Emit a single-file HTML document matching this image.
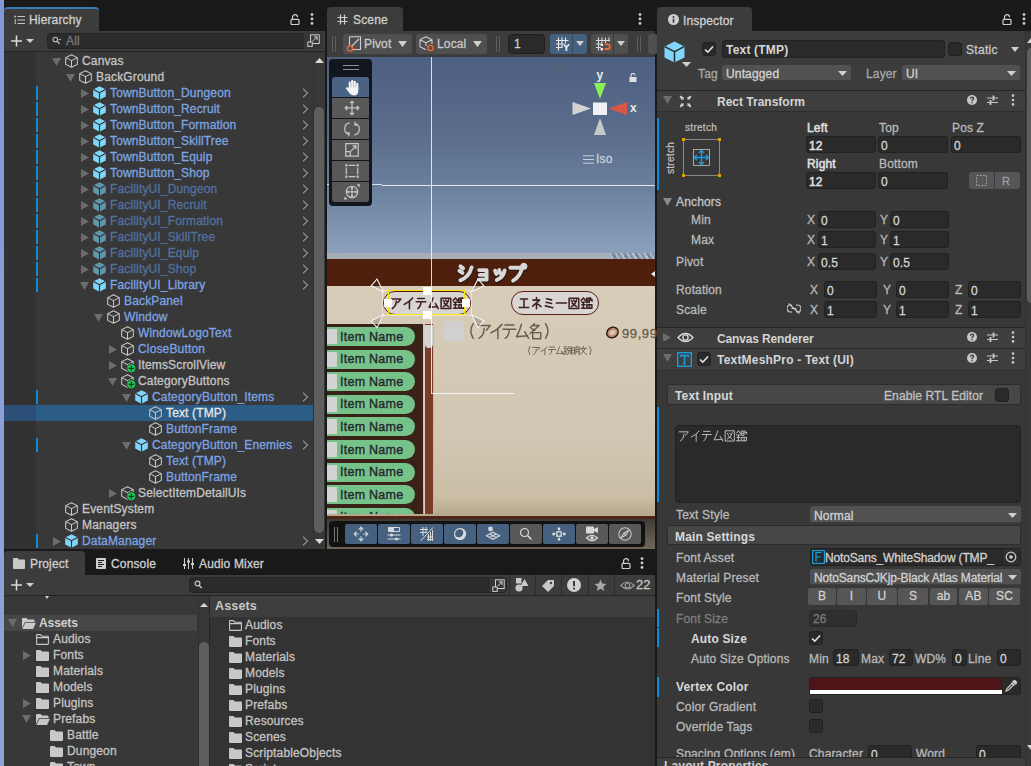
<!DOCTYPE html>
<html><head><meta charset="utf-8"><style>
*{box-sizing:border-box;margin:0;padding:0}
html,body{width:1031px;height:766px;overflow:hidden;background:#191919;font-family:"Liberation Sans",sans-serif;font-size:12px;color:#c4c4c4;position:relative}
.a{position:absolute}
.t{position:absolute;white-space:nowrap;line-height:16px;letter-spacing:.15px;font-size:12px;-webkit-text-stroke:.3px currentColor}
.tab{position:absolute;background:#3c3c3c;border-radius:4px 4px 0 0}
.fld{position:absolute;background:#2a2a2a;border:1px solid #212121;border-radius:3px}
.t[style*="bold"]{-webkit-text-stroke:0;font-size:12px}
.btn{position:absolute;background:#585858;border-radius:3px}
</style></head><body>
<div class="a" style="left:0;top:0;width:4px;height:766px;background:linear-gradient(#8298d6,#8aa0da 50%,#8ba3d8)"></div>
<div class="tab" style="left:4px;top:7px;width:95px;height:24px;border-top:2px solid #3a79bb"></div>
<svg class="a" style="left:14px;top:15px" width="11" height="10" viewBox="0 0 11 10"><path d="M3.5 1.5H11M3.5 5H11M3.5 8.5H11" stroke="#c8c8c8" stroke-width="1.1"/><path d="M.3 1.5H2M1.2 .5V2.5M1.2 4.2V9.2M1.2 5H2.2M1.2 8.5H2.2" stroke="#c8c8c8" stroke-width=".9"/></svg>
<div class="t" style="left:29px;top:12px;color:#cfcfcf">Hierarchy</div>
<svg class="a" style="left:290px;top:14px" width="10" height="11" viewBox="0 0 10 11"><path d="M2.5 5V3.2A2.5 2.5 0 0 1 7.5 3.2" fill="none" stroke="#d0d0d0" stroke-width="1.2"/><rect x="1" y="5.3" width="8" height="5.2" rx="1" fill="none" stroke="#d0d0d0" stroke-width="1.2"/></svg>
<svg class="a" style="left:310px;top:13px" width="4" height="12" viewBox="0 0 4 12"><circle cx="2" cy="1.6" r="1.4" fill="#d0d0d0"/><circle cx="2" cy="6" r="1.4" fill="#d0d0d0"/><circle cx="2" cy="10.4" r="1.4" fill="#d0d0d0"/></svg>
<div class="a" style="left:4px;top:31px;width:321px;height:21px;background:#3c3c3c;border-bottom:1px solid #242424"></div>
<svg class="a" style="left:10px;top:34px" width="26" height="14" viewBox="0 0 26 14"><path d="M6.5 1.5V12.5M1 7H12" stroke="#d8d8d8" stroke-width="1.6"/><path d="M16 5H24L20 9Z" fill="#d0d0d0"/></svg>
<div class="fld" style="left:47px;top:33px;width:276px;height:16px;border-radius:4px;background:#2b2b2b;border-color:#242424"></div>
<svg class="a" style="left:52px;top:36px" width="10" height="10" viewBox="0 0 10 10"><circle cx="3.3" cy="3.5" r="2.3" fill="none" stroke="#bdbdbd" stroke-width="1.1"/><path d="M5 5.2L7.6 7.8" stroke="#bdbdbd" stroke-width="1.3"/><path d="M6.3 3H9.3L7.8 4.6Z" fill="#bdbdbd"/></svg>
<div class="t" style="left:66px;top:33px;color:#7a7a7a">All</div>
<div class="a" style="left:304px;top:33px;width:19px;height:16px;background:#363636;border-radius:0 4px 4px 0"></div>
<svg class="a" style="left:307px;top:34px" width="13" height="13" viewBox="0 0 13 13"><rect x="3.5" y=".8" width="8.7" height="8.7" fill="none" stroke="#cfcfcf" stroke-width="1"/><rect x=".8" y="8" width="4.4" height="4.4" fill="#363636" stroke="#cfcfcf" stroke-width="1"/><path d="M5.5 7.3L10 2.8M6.8 2.8H10V6" fill="none" stroke="#cfcfcf" stroke-width="1"/></svg>
<div class="a" style="left:4px;top:52px;width:32px;height:497px;background:#323232"></div>
<div class="a" style="left:36px;top:52px;width:277px;height:497px;background:#383838"></div>
<div class="a" style="left:313px;top:52px;width:12px;height:497px;background:#383838;border-left:1px solid #303030"></div>
<svg class="a" style="left:315px;top:58px" width="9" height="5" viewBox="0 0 9 5"><path d="M0 5H9L4.5 0Z" fill="#d8d8d8"/></svg>
<svg class="a" style="left:315px;top:539px" width="9" height="5" viewBox="0 0 9 5"><path d="M0 0H9L4.5 5Z" fill="#d8d8d8"/></svg>
<div class="a" style="left:314px;top:107px;width:10px;height:426px;background:#5e5e5e;border-radius:5px"></div>
<div class="a" style="left:4px;top:405px;width:32px;height:16px;background:#2d4e76"></div>
<div class="a" style="left:36px;top:405px;width:277px;height:16px;background:#2c5d87"></div>
<svg class="a" style="left:52px;top:58px" width="9" height="8" viewBox="0 0 9 8"><path d="M0 0H9L4.5 8Z" fill="#6c6c6c"/></svg>
<svg class="a" style="left:65px;top:54px" width="13" height="14" viewBox="0 0 13 14"><path d="M6.5 .7L12.3 3.6V10.4L6.5 13.3L.7 10.4V3.6Z M.7 3.6L6.5 6.6L12.3 3.6M6.5 6.6V13.3" fill="none" stroke="#c9c9c9" stroke-width="1.05" stroke-linejoin="round"/></svg>
<div class="t" style="left:82px;top:53px;color:#c4c4c4">Canvas</div>
<svg class="a" style="left:66px;top:74px" width="9" height="8" viewBox="0 0 9 8"><path d="M0 0H9L4.5 8Z" fill="#6c6c6c"/></svg>
<svg class="a" style="left:79px;top:70px" width="13" height="14" viewBox="0 0 13 14"><path d="M6.5 .7L12.3 3.6V10.4L6.5 13.3L.7 10.4V3.6Z M.7 3.6L6.5 6.6L12.3 3.6M6.5 6.6V13.3" fill="none" stroke="#c9c9c9" stroke-width="1.05" stroke-linejoin="round"/></svg>
<div class="t" style="left:96px;top:69px;color:#c4c4c4">BackGround</div>
<svg class="a" style="left:81px;top:89px" width="8" height="9" viewBox="0 0 8 9"><path d="M0 0V9L8 4.5Z" fill="#6c6c6c"/></svg>
<svg class="a" style="left:93px;top:86px" width="13" height="14" viewBox="0 0 13 14"><path d="M6.5 .3L12.8 3.4V10.6L6.5 13.7L.2 10.6V3.4Z" fill="#80d5fa"/><path d="M.4 3.6L6.5 6.7L12.6 3.6M6.5 6.7V13.7" fill="none" stroke="#2d2d2d" stroke-width="1.1"/></svg>
<div class="t" style="left:110px;top:85px;color:#7ba4e3">TownButton_Dungeon</div>
<div class="a" style="left:36px;top:86px;width:2px;height:14px;background:#0f8bd8"></div>
<svg class="a" style="left:302px;top:88px" width="7" height="10" viewBox="0 0 7 10"><path d="M1 .8L5.6 5L1 9.2" fill="none" stroke="#8c8c8c" stroke-width="1.3"/></svg>
<svg class="a" style="left:81px;top:105px" width="8" height="9" viewBox="0 0 8 9"><path d="M0 0V9L8 4.5Z" fill="#6c6c6c"/></svg>
<svg class="a" style="left:93px;top:102px" width="13" height="14" viewBox="0 0 13 14"><path d="M6.5 .3L12.8 3.4V10.6L6.5 13.7L.2 10.6V3.4Z" fill="#80d5fa"/><path d="M.4 3.6L6.5 6.7L12.6 3.6M6.5 6.7V13.7" fill="none" stroke="#2d2d2d" stroke-width="1.1"/></svg>
<div class="t" style="left:110px;top:101px;color:#7ba4e3">TownButton_Recruit</div>
<div class="a" style="left:36px;top:102px;width:2px;height:14px;background:#0f8bd8"></div>
<svg class="a" style="left:302px;top:104px" width="7" height="10" viewBox="0 0 7 10"><path d="M1 .8L5.6 5L1 9.2" fill="none" stroke="#8c8c8c" stroke-width="1.3"/></svg>
<svg class="a" style="left:81px;top:121px" width="8" height="9" viewBox="0 0 8 9"><path d="M0 0V9L8 4.5Z" fill="#6c6c6c"/></svg>
<svg class="a" style="left:93px;top:118px" width="13" height="14" viewBox="0 0 13 14"><path d="M6.5 .3L12.8 3.4V10.6L6.5 13.7L.2 10.6V3.4Z" fill="#80d5fa"/><path d="M.4 3.6L6.5 6.7L12.6 3.6M6.5 6.7V13.7" fill="none" stroke="#2d2d2d" stroke-width="1.1"/></svg>
<div class="t" style="left:110px;top:117px;color:#7ba4e3">TownButton_Formation</div>
<div class="a" style="left:36px;top:118px;width:2px;height:14px;background:#0f8bd8"></div>
<svg class="a" style="left:302px;top:120px" width="7" height="10" viewBox="0 0 7 10"><path d="M1 .8L5.6 5L1 9.2" fill="none" stroke="#8c8c8c" stroke-width="1.3"/></svg>
<svg class="a" style="left:81px;top:137px" width="8" height="9" viewBox="0 0 8 9"><path d="M0 0V9L8 4.5Z" fill="#6c6c6c"/></svg>
<svg class="a" style="left:93px;top:134px" width="13" height="14" viewBox="0 0 13 14"><path d="M6.5 .3L12.8 3.4V10.6L6.5 13.7L.2 10.6V3.4Z" fill="#80d5fa"/><path d="M.4 3.6L6.5 6.7L12.6 3.6M6.5 6.7V13.7" fill="none" stroke="#2d2d2d" stroke-width="1.1"/></svg>
<div class="t" style="left:110px;top:133px;color:#7ba4e3">TownButton_SkillTree</div>
<div class="a" style="left:36px;top:134px;width:2px;height:14px;background:#0f8bd8"></div>
<svg class="a" style="left:302px;top:136px" width="7" height="10" viewBox="0 0 7 10"><path d="M1 .8L5.6 5L1 9.2" fill="none" stroke="#8c8c8c" stroke-width="1.3"/></svg>
<svg class="a" style="left:81px;top:153px" width="8" height="9" viewBox="0 0 8 9"><path d="M0 0V9L8 4.5Z" fill="#6c6c6c"/></svg>
<svg class="a" style="left:93px;top:150px" width="13" height="14" viewBox="0 0 13 14"><path d="M6.5 .3L12.8 3.4V10.6L6.5 13.7L.2 10.6V3.4Z" fill="#80d5fa"/><path d="M.4 3.6L6.5 6.7L12.6 3.6M6.5 6.7V13.7" fill="none" stroke="#2d2d2d" stroke-width="1.1"/></svg>
<div class="t" style="left:110px;top:149px;color:#7ba4e3">TownButton_Equip</div>
<div class="a" style="left:36px;top:150px;width:2px;height:14px;background:#0f8bd8"></div>
<svg class="a" style="left:302px;top:152px" width="7" height="10" viewBox="0 0 7 10"><path d="M1 .8L5.6 5L1 9.2" fill="none" stroke="#8c8c8c" stroke-width="1.3"/></svg>
<svg class="a" style="left:81px;top:169px" width="8" height="9" viewBox="0 0 8 9"><path d="M0 0V9L8 4.5Z" fill="#6c6c6c"/></svg>
<svg class="a" style="left:93px;top:166px" width="13" height="14" viewBox="0 0 13 14"><path d="M6.5 .3L12.8 3.4V10.6L6.5 13.7L.2 10.6V3.4Z" fill="#80d5fa"/><path d="M.4 3.6L6.5 6.7L12.6 3.6M6.5 6.7V13.7" fill="none" stroke="#2d2d2d" stroke-width="1.1"/></svg>
<div class="t" style="left:110px;top:165px;color:#7ba4e3">TownButton_Shop</div>
<div class="a" style="left:36px;top:166px;width:2px;height:14px;background:#0f8bd8"></div>
<svg class="a" style="left:302px;top:168px" width="7" height="10" viewBox="0 0 7 10"><path d="M1 .8L5.6 5L1 9.2" fill="none" stroke="#8c8c8c" stroke-width="1.3"/></svg>
<svg class="a" style="left:81px;top:185px" width="8" height="9" viewBox="0 0 8 9"><path d="M0 0V9L8 4.5Z" fill="#6c6c6c"/></svg>
<svg class="a" style="left:93px;top:182px" width="13" height="14" viewBox="0 0 13 14"><path d="M6.5 .3L12.8 3.4V10.6L6.5 13.7L.2 10.6V3.4Z" fill="#5f97ae"/><path d="M.4 3.6L6.5 6.7L12.6 3.6M6.5 6.7V13.7" fill="none" stroke="#2d2d2d" stroke-width="1.1"/></svg>
<div class="t" style="left:110px;top:181px;color:#5271a0">FacilityUI_Dungeon</div>
<div class="a" style="left:36px;top:182px;width:2px;height:14px;background:#0f8bd8"></div>
<svg class="a" style="left:302px;top:184px" width="7" height="10" viewBox="0 0 7 10"><path d="M1 .8L5.6 5L1 9.2" fill="none" stroke="#8c8c8c" stroke-width="1.3"/></svg>
<svg class="a" style="left:81px;top:201px" width="8" height="9" viewBox="0 0 8 9"><path d="M0 0V9L8 4.5Z" fill="#6c6c6c"/></svg>
<svg class="a" style="left:93px;top:198px" width="13" height="14" viewBox="0 0 13 14"><path d="M6.5 .3L12.8 3.4V10.6L6.5 13.7L.2 10.6V3.4Z" fill="#5f97ae"/><path d="M.4 3.6L6.5 6.7L12.6 3.6M6.5 6.7V13.7" fill="none" stroke="#2d2d2d" stroke-width="1.1"/></svg>
<div class="t" style="left:110px;top:197px;color:#5271a0">FacilityUI_Recruit</div>
<div class="a" style="left:36px;top:198px;width:2px;height:14px;background:#0f8bd8"></div>
<svg class="a" style="left:302px;top:200px" width="7" height="10" viewBox="0 0 7 10"><path d="M1 .8L5.6 5L1 9.2" fill="none" stroke="#8c8c8c" stroke-width="1.3"/></svg>
<svg class="a" style="left:81px;top:217px" width="8" height="9" viewBox="0 0 8 9"><path d="M0 0V9L8 4.5Z" fill="#6c6c6c"/></svg>
<svg class="a" style="left:93px;top:214px" width="13" height="14" viewBox="0 0 13 14"><path d="M6.5 .3L12.8 3.4V10.6L6.5 13.7L.2 10.6V3.4Z" fill="#5f97ae"/><path d="M.4 3.6L6.5 6.7L12.6 3.6M6.5 6.7V13.7" fill="none" stroke="#2d2d2d" stroke-width="1.1"/></svg>
<div class="t" style="left:110px;top:213px;color:#5271a0">FacilityUI_Formation</div>
<div class="a" style="left:36px;top:214px;width:2px;height:14px;background:#0f8bd8"></div>
<svg class="a" style="left:302px;top:216px" width="7" height="10" viewBox="0 0 7 10"><path d="M1 .8L5.6 5L1 9.2" fill="none" stroke="#8c8c8c" stroke-width="1.3"/></svg>
<svg class="a" style="left:81px;top:233px" width="8" height="9" viewBox="0 0 8 9"><path d="M0 0V9L8 4.5Z" fill="#6c6c6c"/></svg>
<svg class="a" style="left:93px;top:230px" width="13" height="14" viewBox="0 0 13 14"><path d="M6.5 .3L12.8 3.4V10.6L6.5 13.7L.2 10.6V3.4Z" fill="#5f97ae"/><path d="M.4 3.6L6.5 6.7L12.6 3.6M6.5 6.7V13.7" fill="none" stroke="#2d2d2d" stroke-width="1.1"/></svg>
<div class="t" style="left:110px;top:229px;color:#5271a0">FacilityUI_SkillTree</div>
<div class="a" style="left:36px;top:230px;width:2px;height:14px;background:#0f8bd8"></div>
<svg class="a" style="left:302px;top:232px" width="7" height="10" viewBox="0 0 7 10"><path d="M1 .8L5.6 5L1 9.2" fill="none" stroke="#8c8c8c" stroke-width="1.3"/></svg>
<svg class="a" style="left:81px;top:249px" width="8" height="9" viewBox="0 0 8 9"><path d="M0 0V9L8 4.5Z" fill="#6c6c6c"/></svg>
<svg class="a" style="left:93px;top:246px" width="13" height="14" viewBox="0 0 13 14"><path d="M6.5 .3L12.8 3.4V10.6L6.5 13.7L.2 10.6V3.4Z" fill="#5f97ae"/><path d="M.4 3.6L6.5 6.7L12.6 3.6M6.5 6.7V13.7" fill="none" stroke="#2d2d2d" stroke-width="1.1"/></svg>
<div class="t" style="left:110px;top:245px;color:#5271a0">FacilityUI_Equip</div>
<div class="a" style="left:36px;top:246px;width:2px;height:14px;background:#0f8bd8"></div>
<svg class="a" style="left:302px;top:248px" width="7" height="10" viewBox="0 0 7 10"><path d="M1 .8L5.6 5L1 9.2" fill="none" stroke="#8c8c8c" stroke-width="1.3"/></svg>
<svg class="a" style="left:81px;top:265px" width="8" height="9" viewBox="0 0 8 9"><path d="M0 0V9L8 4.5Z" fill="#6c6c6c"/></svg>
<svg class="a" style="left:93px;top:262px" width="13" height="14" viewBox="0 0 13 14"><path d="M6.5 .3L12.8 3.4V10.6L6.5 13.7L.2 10.6V3.4Z" fill="#5f97ae"/><path d="M.4 3.6L6.5 6.7L12.6 3.6M6.5 6.7V13.7" fill="none" stroke="#2d2d2d" stroke-width="1.1"/></svg>
<div class="t" style="left:110px;top:261px;color:#5271a0">FacilityUI_Shop</div>
<div class="a" style="left:36px;top:262px;width:2px;height:14px;background:#0f8bd8"></div>
<svg class="a" style="left:302px;top:264px" width="7" height="10" viewBox="0 0 7 10"><path d="M1 .8L5.6 5L1 9.2" fill="none" stroke="#8c8c8c" stroke-width="1.3"/></svg>
<svg class="a" style="left:80px;top:282px" width="9" height="8" viewBox="0 0 9 8"><path d="M0 0H9L4.5 8Z" fill="#6c6c6c"/></svg>
<svg class="a" style="left:93px;top:278px" width="13" height="14" viewBox="0 0 13 14"><path d="M6.5 .3L12.8 3.4V10.6L6.5 13.7L.2 10.6V3.4Z" fill="#80d5fa"/><path d="M.4 3.6L6.5 6.7L12.6 3.6M6.5 6.7V13.7" fill="none" stroke="#2d2d2d" stroke-width="1.1"/></svg>
<div class="t" style="left:110px;top:277px;color:#7ba4e3">FacilityUI_Library</div>
<div class="a" style="left:36px;top:278px;width:2px;height:14px;background:#0f8bd8"></div>
<svg class="a" style="left:302px;top:280px" width="7" height="10" viewBox="0 0 7 10"><path d="M1 .8L5.6 5L1 9.2" fill="none" stroke="#8c8c8c" stroke-width="1.3"/></svg>
<svg class="a" style="left:107px;top:294px" width="13" height="14" viewBox="0 0 13 14"><path d="M6.5 .7L12.3 3.6V10.4L6.5 13.3L.7 10.4V3.6Z M.7 3.6L6.5 6.6L12.3 3.6M6.5 6.6V13.3" fill="none" stroke="#c9c9c9" stroke-width="1.05" stroke-linejoin="round"/></svg>
<div class="t" style="left:124px;top:293px;color:#7ba4e3">BackPanel</div>
<svg class="a" style="left:94px;top:314px" width="9" height="8" viewBox="0 0 9 8"><path d="M0 0H9L4.5 8Z" fill="#6c6c6c"/></svg>
<svg class="a" style="left:107px;top:310px" width="13" height="14" viewBox="0 0 13 14"><path d="M6.5 .7L12.3 3.6V10.4L6.5 13.3L.7 10.4V3.6Z M.7 3.6L6.5 6.6L12.3 3.6M6.5 6.6V13.3" fill="none" stroke="#c9c9c9" stroke-width="1.05" stroke-linejoin="round"/></svg>
<div class="t" style="left:124px;top:309px;color:#7ba4e3">Window</div>
<svg class="a" style="left:121px;top:326px" width="13" height="14" viewBox="0 0 13 14"><path d="M6.5 .7L12.3 3.6V10.4L6.5 13.3L.7 10.4V3.6Z M.7 3.6L6.5 6.6L12.3 3.6M6.5 6.6V13.3" fill="none" stroke="#c9c9c9" stroke-width="1.05" stroke-linejoin="round"/></svg>
<div class="t" style="left:138px;top:325px;color:#7ba4e3">WindowLogoText</div>
<svg class="a" style="left:109px;top:345px" width="8" height="9" viewBox="0 0 8 9"><path d="M0 0V9L8 4.5Z" fill="#6c6c6c"/></svg>
<svg class="a" style="left:121px;top:342px" width="13" height="14" viewBox="0 0 13 14"><path d="M6.5 .7L12.3 3.6V10.4L6.5 13.3L.7 10.4V3.6Z M.7 3.6L6.5 6.6L12.3 3.6M6.5 6.6V13.3" fill="none" stroke="#c9c9c9" stroke-width="1.05" stroke-linejoin="round"/></svg>
<div class="t" style="left:138px;top:341px;color:#7ba4e3">CloseButton</div>
<svg class="a" style="left:109px;top:361px" width="8" height="9" viewBox="0 0 8 9"><path d="M0 0V9L8 4.5Z" fill="#6c6c6c"/></svg>
<svg class="a" style="left:121px;top:358px" width="16" height="16" viewBox="0 0 16 16"><path d="M6.5 .7L12.3 3.6V10.4L6.5 13.3L.7 10.4V3.6Z M.7 3.6L6.5 6.6L12.3 3.6M6.5 6.6V13.3" fill="none" stroke="#c9c9c9" stroke-width="1.05" stroke-linejoin="round"/><circle cx="10.3" cy="10.3" r="4.6" fill="#1fc255" stroke="#2a2a2a" stroke-width=".9"/><path d="M10.3 7.6V13M7.6 10.3H13" stroke="#1d3a24" stroke-width="1.2"/></svg>
<div class="t" style="left:138px;top:357px;color:#c4c4c4">ItemsScrollView</div>
<svg class="a" style="left:108px;top:378px" width="9" height="8" viewBox="0 0 9 8"><path d="M0 0H9L4.5 8Z" fill="#6c6c6c"/></svg>
<svg class="a" style="left:121px;top:374px" width="16" height="16" viewBox="0 0 16 16"><path d="M6.5 .7L12.3 3.6V10.4L6.5 13.3L.7 10.4V3.6Z M.7 3.6L6.5 6.6L12.3 3.6M6.5 6.6V13.3" fill="none" stroke="#c9c9c9" stroke-width="1.05" stroke-linejoin="round"/><circle cx="10.3" cy="10.3" r="4.6" fill="#1fc255" stroke="#2a2a2a" stroke-width=".9"/><path d="M10.3 7.6V13M7.6 10.3H13" stroke="#1d3a24" stroke-width="1.2"/></svg>
<div class="t" style="left:138px;top:373px;color:#c4c4c4">CategoryButtons</div>
<svg class="a" style="left:122px;top:394px" width="9" height="8" viewBox="0 0 9 8"><path d="M0 0H9L4.5 8Z" fill="#6c6c6c"/></svg>
<svg class="a" style="left:135px;top:390px" width="13" height="14" viewBox="0 0 13 14"><path d="M6.5 .3L12.8 3.4V10.6L6.5 13.7L.2 10.6V3.4Z" fill="#80d5fa"/><path d="M.4 3.6L6.5 6.7L12.6 3.6M6.5 6.7V13.7" fill="none" stroke="#2d2d2d" stroke-width="1.1"/></svg>
<div class="t" style="left:152px;top:389px;color:#7ba4e3">CategoryButton_Items</div>
<div class="a" style="left:36px;top:390px;width:2px;height:14px;background:#0f8bd8"></div>
<svg class="a" style="left:302px;top:392px" width="7" height="10" viewBox="0 0 7 10"><path d="M1 .8L5.6 5L1 9.2" fill="none" stroke="#8c8c8c" stroke-width="1.3"/></svg>
<svg class="a" style="left:149px;top:406px" width="13" height="14" viewBox="0 0 13 14"><path d="M6.5 .7L12.3 3.6V10.4L6.5 13.3L.7 10.4V3.6Z M.7 3.6L6.5 6.6L12.3 3.6M6.5 6.6V13.3" fill="none" stroke="#c9c9c9" stroke-width="1.05" stroke-linejoin="round"/></svg>
<div class="t" style="left:166px;top:405px;color:#e6e6e6">Text (TMP)</div>
<svg class="a" style="left:149px;top:422px" width="13" height="14" viewBox="0 0 13 14"><path d="M6.5 .7L12.3 3.6V10.4L6.5 13.3L.7 10.4V3.6Z M.7 3.6L6.5 6.6L12.3 3.6M6.5 6.6V13.3" fill="none" stroke="#c9c9c9" stroke-width="1.05" stroke-linejoin="round"/></svg>
<div class="t" style="left:166px;top:421px;color:#7ba4e3">ButtonFrame</div>
<svg class="a" style="left:122px;top:442px" width="9" height="8" viewBox="0 0 9 8"><path d="M0 0H9L4.5 8Z" fill="#6c6c6c"/></svg>
<svg class="a" style="left:135px;top:438px" width="13" height="14" viewBox="0 0 13 14"><path d="M6.5 .3L12.8 3.4V10.6L6.5 13.7L.2 10.6V3.4Z" fill="#80d5fa"/><path d="M.4 3.6L6.5 6.7L12.6 3.6M6.5 6.7V13.7" fill="none" stroke="#2d2d2d" stroke-width="1.1"/></svg>
<div class="t" style="left:152px;top:437px;color:#7ba4e3">CategoryButton_Enemies</div>
<div class="a" style="left:36px;top:438px;width:2px;height:14px;background:#0f8bd8"></div>
<svg class="a" style="left:302px;top:440px" width="7" height="10" viewBox="0 0 7 10"><path d="M1 .8L5.6 5L1 9.2" fill="none" stroke="#8c8c8c" stroke-width="1.3"/></svg>
<svg class="a" style="left:149px;top:454px" width="13" height="14" viewBox="0 0 13 14"><path d="M6.5 .7L12.3 3.6V10.4L6.5 13.3L.7 10.4V3.6Z M.7 3.6L6.5 6.6L12.3 3.6M6.5 6.6V13.3" fill="none" stroke="#c9c9c9" stroke-width="1.05" stroke-linejoin="round"/></svg>
<div class="t" style="left:166px;top:453px;color:#7ba4e3">Text (TMP)</div>
<svg class="a" style="left:149px;top:470px" width="13" height="14" viewBox="0 0 13 14"><path d="M6.5 .7L12.3 3.6V10.4L6.5 13.3L.7 10.4V3.6Z M.7 3.6L6.5 6.6L12.3 3.6M6.5 6.6V13.3" fill="none" stroke="#c9c9c9" stroke-width="1.05" stroke-linejoin="round"/></svg>
<div class="t" style="left:166px;top:469px;color:#7ba4e3">ButtonFrame</div>
<svg class="a" style="left:109px;top:489px" width="8" height="9" viewBox="0 0 8 9"><path d="M0 0V9L8 4.5Z" fill="#6c6c6c"/></svg>
<svg class="a" style="left:121px;top:486px" width="16" height="16" viewBox="0 0 16 16"><path d="M6.5 .7L12.3 3.6V10.4L6.5 13.3L.7 10.4V3.6Z M.7 3.6L6.5 6.6L12.3 3.6M6.5 6.6V13.3" fill="none" stroke="#c9c9c9" stroke-width="1.05" stroke-linejoin="round"/><circle cx="10.3" cy="10.3" r="4.6" fill="#1fc255" stroke="#2a2a2a" stroke-width=".9"/><path d="M10.3 7.6V13M7.6 10.3H13" stroke="#1d3a24" stroke-width="1.2"/></svg>
<div class="t" style="left:138px;top:485px;color:#c4c4c4">SelectItemDetailUIs</div>
<svg class="a" style="left:65px;top:502px" width="13" height="14" viewBox="0 0 13 14"><path d="M6.5 .7L12.3 3.6V10.4L6.5 13.3L.7 10.4V3.6Z M.7 3.6L6.5 6.6L12.3 3.6M6.5 6.6V13.3" fill="none" stroke="#c9c9c9" stroke-width="1.05" stroke-linejoin="round"/></svg>
<div class="t" style="left:82px;top:501px;color:#c4c4c4">EventSystem</div>
<svg class="a" style="left:65px;top:518px" width="13" height="14" viewBox="0 0 13 14"><path d="M6.5 .7L12.3 3.6V10.4L6.5 13.3L.7 10.4V3.6Z M.7 3.6L6.5 6.6L12.3 3.6M6.5 6.6V13.3" fill="none" stroke="#c9c9c9" stroke-width="1.05" stroke-linejoin="round"/></svg>
<div class="t" style="left:82px;top:517px;color:#c4c4c4">Managers</div>
<svg class="a" style="left:53px;top:537px" width="8" height="9" viewBox="0 0 8 9"><path d="M0 0V9L8 4.5Z" fill="#6c6c6c"/></svg>
<svg class="a" style="left:65px;top:534px" width="13" height="14" viewBox="0 0 13 14"><path d="M6.5 .3L12.8 3.4V10.6L6.5 13.7L.2 10.6V3.4Z" fill="#80d5fa"/><path d="M.4 3.6L6.5 6.7L12.6 3.6M6.5 6.7V13.7" fill="none" stroke="#2d2d2d" stroke-width="1.1"/></svg>
<div class="t" style="left:82px;top:533px;color:#7ba4e3">DataManager</div>
<div class="a" style="left:36px;top:534px;width:2px;height:14px;background:#0f8bd8"></div>
<svg class="a" style="left:302px;top:536px" width="7" height="10" viewBox="0 0 7 10"><path d="M1 .8L5.6 5L1 9.2" fill="none" stroke="#8c8c8c" stroke-width="1.3"/></svg>
<div class="tab" style="left:327px;top:7px;width:76px;height:24px"></div>
<svg class="a" style="left:337px;top:14px" width="11" height="11" viewBox="0 0 11 11"><path d="M3.5 .5V10.5M7.5 .5V10.5M.5 3.5H10.5M.5 7.5H10.5" stroke="#cfcfcf" stroke-width="1.2"/></svg>
<div class="t" style="left:353px;top:12px;color:#cfcfcf">Scene</div>
<svg class="a" style="left:638px;top:13px" width="4" height="12" viewBox="0 0 4 12"><circle cx="2" cy="1.6" r="1.4" fill="#d0d0d0"/><circle cx="2" cy="6" r="1.4" fill="#d0d0d0"/><circle cx="2" cy="10.4" r="1.4" fill="#d0d0d0"/></svg>
<div class="a" style="left:327px;top:31px;width:328px;height:26px;background:#3c3c3c"></div>
<div class="a" style="left:332px;top:36px;width:1px;height:16px;background:#5e5e5e"></div>
<div class="a" style="left:335px;top:36px;width:1px;height:16px;background:#5e5e5e"></div>
<div class="a" style="left:496px;top:36px;width:1px;height:16px;background:#5e5e5e"></div>
<div class="a" style="left:499px;top:36px;width:1px;height:16px;background:#5e5e5e"></div>
<div class="a" style="left:637px;top:36px;width:1px;height:16px;background:#5e5e5e"></div>
<div class="a" style="left:640px;top:36px;width:1px;height:16px;background:#5e5e5e"></div>
<div class="btn" style="left:343px;top:34px;width:69px;height:20px;background:#4f4f4f"></div>
<svg class="a" style="left:346px;top:36px" width="16" height="16" viewBox="0 0 16 16"><path d="M3.5 .8H14.5V13.5H6.5M3.5 .8V9.5M5 11L13 3" fill="none" stroke="#cfcfcf" stroke-width="1.1"/><circle cx="4" cy="12.5" r="2.6" fill="none" stroke="#f26b2c" stroke-width="1.3"/></svg>
<div class="t" style="left:364px;top:36px;color:#c8c8c8">Pivot</div>
<svg class="a" style="left:398px;top:41px" width="9" height="6" viewBox="0 0 9 6"><path d="M0 0H9L4.5 6Z" fill="#cfcfcf"/></svg>
<div class="btn" style="left:416px;top:34px;width:71px;height:20px;background:#4f4f4f"></div>
<svg class="a" style="left:419px;top:36px" width="16" height="16" viewBox="0 0 16 16"><path d="M7 .8L13 3.8V8M1 3.8V10.8L7 13.8M1 3.8L7 6.8L13 3.8M7 6.8V10M7 .8L1 3.8" fill="none" stroke="#cfcfcf" stroke-width="1.1" stroke-linejoin="round"/><circle cx="11.5" cy="12" r="2.6" fill="none" stroke="#f26b2c" stroke-width="1.3"/></svg>
<div class="t" style="left:437px;top:36px;color:#c8c8c8">Local</div>
<svg class="a" style="left:473px;top:41px" width="9" height="6" viewBox="0 0 9 6"><path d="M0 0H9L4.5 6Z" fill="#cfcfcf"/></svg>
<div class="fld" style="left:508px;top:34px;width:37px;height:20px;background:#2a2a2a;border-color:#1f1f1f;border-radius:4px"></div>
<div class="t" style="left:514px;top:36px;color:#cfcfcf">1</div>
<div class="btn" style="left:550px;top:34px;width:37px;height:20px;background:#46607f"></div>
<div class="a" style="left:572px;top:34px;width:1px;height:20px;background:#3a4c64"></div>
<svg class="a" style="left:556px;top:37px" width="14" height="14" viewBox="0 0 14 14"><path d="M2.5 .5V13.5M6 .5V11M9.5 .5V6.5M0 3.5H12.5M0 7H7.5M0 10.5H6.5" stroke="#e8e8e8" stroke-width="1.1" fill="none"/><path d="M7.8 7.2L10.4 10.4L13 7.2M10.4 10.4V14" stroke="#e8e8e8" stroke-width="1.8" fill="none"/></svg>
<svg class="a" style="left:576px;top:41px" width="8" height="5" viewBox="0 0 8 5"><path d="M0 0H8L4 5Z" fill="#cfcfcf"/></svg>
<div class="btn" style="left:591px;top:34px;width:37px;height:20px;background:#4f4f4f"></div>
<div class="a" style="left:613px;top:34px;width:1px;height:20px;background:#3c3c3c"></div>
<svg class="a" style="left:596px;top:37px" width="15" height="14" viewBox="0 0 15 14"><path d="M2.5 .5V13.5M6 .5V6M9.5 .5V6M13 .5V4.5M0 3.5H14M0 7H5M0 10.5H5" stroke="#d8d8d8" stroke-width="1.1" fill="none"/><rect x="4.6" y="6.6" width="2.4" height="2.4" fill="#f0f0f0"/><rect x="4.6" y="11" width="2.4" height="2.4" fill="#f0f0f0"/><path d="M8.5 7.4H11.6A2.3 2.3 0 0 1 11.6 12H8.5" fill="none" stroke="#f26b2c" stroke-width="1.8"/></svg>
<svg class="a" style="left:617px;top:41px" width="8" height="5" viewBox="0 0 8 5"><path d="M0 0H8L4 5Z" fill="#cfcfcf"/></svg>
<div class="btn" style="left:648px;top:34px;width:10px;height:20px;background:#4f4f4f"></div>
<div class="a" style="left:327px;top:57px;width:328px;height:492px;overflow:hidden;background:#3a2a22">
<div class="a" style="left:0;top:0;width:328px;height:196px;background:linear-gradient(#4e6082 0%,#5a6d8c 40%,#6a7f9d 65%,#8aa0bb 100%)"></div>
<div class="a" style="left:0;top:196px;width:328px;height:6px;background:linear-gradient(90deg,#a4acb4,#aab0b8 60%,#a8b0b8 66%)"></div>
<div class="a" style="left:285px;top:196px;width:43px;height:6px;background:repeating-linear-gradient(60deg,#bcc2ca 0 2px,#7889a0 2px 5px,#aeb6c0 5px 7px,#8796aa 7px 10px)"></div>
<div class="a" style="left:0;top:202px;width:328px;height:27px;background:#4d1f0c"></div>
<svg class="a" style="left:324px;top:214px" width="4" height="6" viewBox="0 0 4 6"><path d="M4 0V6L0 3Z" fill="#e8e8e8"/></svg>
<div class="a" style="left:0;top:229px;width:328px;height:230px;background:linear-gradient(#d6ccb8,#d0c6b1 70%,#c9bda4 92%,#b5a78c)"></div>
<div class="a" style="left:0;top:459px;width:328px;height:3px;background:#4f2414"></div>
<div class="a" style="left:0;top:462px;width:328px;height:30px;background:linear-gradient(#3d3a34,#5a5248 50%,#6e6659)"></div>
<div class="a" style="left:0;top:267px;width:96px;height:190px;background:#3b2218"></div>
<div class="a" style="left:97px;top:267px;width:10px;height:190px;background:#7a3b28;border-left:1px solid #d8cfc0;border-right:1px solid #c9b9a8"></div>
<div class="a" style="left:98px;top:268px;width:8px;height:23px;background:#d2d2d2;border-radius:0 0 4px 4px"></div>
<div class="a" style="left:0;top:267px;width:96px;height:190px;overflow:hidden">
<div class="a" style="left:-10px;top:3.0px;width:98px;height:19px;background:#75c389;border-radius:10px"></div>
<div class="a" style="left:0;top:5.0px;width:10px;height:15px;background:#d3d3d3"></div>
<div class="t" style="left:13px;top:4.5px;color:#1d2c2a;font-size:12.5px;letter-spacing:.25px;-webkit-text-stroke:.5px #1d2c2a;text-shadow:0 0 1.2px #c5e8cd">Item Name</div>
<div class="a" style="left:-10px;top:25.6px;width:98px;height:19px;background:#75c389;border-radius:10px"></div>
<div class="a" style="left:0;top:27.6px;width:10px;height:15px;background:#d3d3d3"></div>
<div class="t" style="left:13px;top:27.1px;color:#1d2c2a;font-size:12.5px;letter-spacing:.25px;-webkit-text-stroke:.5px #1d2c2a;text-shadow:0 0 1.2px #c5e8cd">Item Name</div>
<div class="a" style="left:-10px;top:48.2px;width:98px;height:19px;background:#75c389;border-radius:10px"></div>
<div class="a" style="left:0;top:50.2px;width:10px;height:15px;background:#d3d3d3"></div>
<div class="t" style="left:13px;top:49.7px;color:#1d2c2a;font-size:12.5px;letter-spacing:.25px;-webkit-text-stroke:.5px #1d2c2a;text-shadow:0 0 1.2px #c5e8cd">Item Name</div>
<div class="a" style="left:-10px;top:70.8px;width:98px;height:19px;background:#75c389;border-radius:10px"></div>
<div class="a" style="left:0;top:72.8px;width:10px;height:15px;background:#d3d3d3"></div>
<div class="t" style="left:13px;top:72.3px;color:#1d2c2a;font-size:12.5px;letter-spacing:.25px;-webkit-text-stroke:.5px #1d2c2a;text-shadow:0 0 1.2px #c5e8cd">Item Name</div>
<div class="a" style="left:-10px;top:93.4px;width:98px;height:19px;background:#75c389;border-radius:10px"></div>
<div class="a" style="left:0;top:95.4px;width:10px;height:15px;background:#d3d3d3"></div>
<div class="t" style="left:13px;top:94.9px;color:#1d2c2a;font-size:12.5px;letter-spacing:.25px;-webkit-text-stroke:.5px #1d2c2a;text-shadow:0 0 1.2px #c5e8cd">Item Name</div>
<div class="a" style="left:-10px;top:116.0px;width:98px;height:19px;background:#75c389;border-radius:10px"></div>
<div class="a" style="left:0;top:118.0px;width:10px;height:15px;background:#d3d3d3"></div>
<div class="t" style="left:13px;top:117.5px;color:#1d2c2a;font-size:12.5px;letter-spacing:.25px;-webkit-text-stroke:.5px #1d2c2a;text-shadow:0 0 1.2px #c5e8cd">Item Name</div>
<div class="a" style="left:-10px;top:138.6px;width:98px;height:19px;background:#75c389;border-radius:10px"></div>
<div class="a" style="left:0;top:140.6px;width:10px;height:15px;background:#d3d3d3"></div>
<div class="t" style="left:13px;top:140.1px;color:#1d2c2a;font-size:12.5px;letter-spacing:.25px;-webkit-text-stroke:.5px #1d2c2a;text-shadow:0 0 1.2px #c5e8cd">Item Name</div>
<div class="a" style="left:-10px;top:161.2px;width:98px;height:19px;background:#75c389;border-radius:10px"></div>
<div class="a" style="left:0;top:163.2px;width:10px;height:15px;background:#d3d3d3"></div>
<div class="t" style="left:13px;top:162.7px;color:#1d2c2a;font-size:12.5px;letter-spacing:.25px;-webkit-text-stroke:.5px #1d2c2a;text-shadow:0 0 1.2px #c5e8cd">Item Name</div>
<div class="a" style="left:-10px;top:183.8px;width:98px;height:19px;background:#75c389;border-radius:10px"></div>
<div class="a" style="left:0;top:185.8px;width:10px;height:15px;background:#d3d3d3"></div>
<div class="t" style="left:13px;top:185.3px;color:#1d2c2a;font-size:12.5px;letter-spacing:.25px;-webkit-text-stroke:.5px #1d2c2a;text-shadow:0 0 1.2px #c5e8cd">Item Name</div>
</div>
</div>
<svg class="a" style="left:457px;top:265px;overflow:visible" width="68.00" height="17" viewBox="0 0 40.00 10"><g fill="none" stroke="#2a1a10" stroke-width="2.8" stroke-linecap="round" stroke-linejoin="round"><path transform="translate(0.00 0)" d="M2 1.4L3.6 2.6M1.4 4L3.2 5.2M8.6 2Q7.2 7.6 2 9.6"/><path transform="translate(10.00 0)" d="M3 3.6H7.4V9.2H3M3.4 6.4H7.4"/><path transform="translate(20.00 0)" d="M2.4 4L3.2 5.8M4.8 3.6L5.4 5.4M8 3.8Q7.2 8 3.4 9.4"/><path transform="translate(30.00 0)" d="M1.4 2.2H8.2Q7.4 7.2 3 9.8M9.3 .4A1 1 0 1 0 9.31 .4"/></g></svg>
<svg class="a" style="left:457px;top:264px;overflow:visible" width="68.00" height="17" viewBox="0 0 40.00 10"><g fill="none" stroke="#d8d8d8" stroke-width="2.3" stroke-linecap="round" stroke-linejoin="round"><path transform="translate(0.00 0)" d="M2 1.4L3.6 2.6M1.4 4L3.2 5.2M8.6 2Q7.2 7.6 2 9.6"/><path transform="translate(10.00 0)" d="M3 3.6H7.4V9.2H3M3.4 6.4H7.4"/><path transform="translate(20.00 0)" d="M2.4 4L3.2 5.8M4.8 3.6L5.4 5.4M8 3.8Q7.2 8 3.4 9.4"/><path transform="translate(30.00 0)" d="M1.4 2.2H8.2Q7.4 7.2 3 9.8M9.3 .4A1 1 0 1 0 9.31 .4"/></g></svg>
<div class="a" style="left:383px;top:291px;width:88px;height:24px;background:#d8d5d2;border:1.6px solid #5a1a1a;border-radius:12px"></div>
<svg class="a" style="left:390px;top:297px;overflow:visible" width="74.88" height="12" viewBox="0 0 62.40 10"><g fill="none" stroke="#3f2020" stroke-width="1.3" stroke-linecap="round" stroke-linejoin="round"><path transform="translate(0.00 0)" d="M1 1.6H9L6.6 4.6M5.2 3.4Q5.2 7.6 2 9.6"/><path transform="translate(10.40 0)" d="M8.4 .8Q5.5 4.4 1.4 6.2M5.8 3.8V9.8"/><path transform="translate(20.80 0)" d="M2.2 1.2H7.8M1 3.9H9M5 3.9Q5 7.6 2.4 9.6"/><path transform="translate(31.20 0)" d="M4.6 .8Q3.2 5.6 1.4 8.6Q5 8.4 8.4 8M6.6 5.4L9 9.6"/><path transform="translate(41.60 0)" d="M1 1V9.6H9V1ZM2.8 2.8L3.8 4.2M4.8 2.6L5.8 3.8M7.2 2.4Q6.4 6.4 2.8 8M3.6 5.2L7.2 8"/><path transform="translate(52.00 0)" d="M2.5 .8L.6 3M2.5 .8L4.2 3M1.2 4.4H3.8M1.2 6.4H3.8M2.5 4.4V9.4M.8 9.4H4.2M5.2 1H7.4V4.6H5.2ZM5.2 2.8H7.4M8.2 .6L9.8 3.4M8.4 2.4H9.8M5.4 6.4H9.6V9.4H5.4ZM7.5 6.4V9.4"/></g></svg>
<div class="a" style="left:511px;top:291px;width:88px;height:24px;background:#d8d5d2;border:1.6px solid #5a1a1a;border-radius:12px"></div>
<svg class="a" style="left:518px;top:297px;overflow:visible" width="74.88" height="12" viewBox="0 0 62.40 10"><g fill="none" stroke="#3f2020" stroke-width="1.3" stroke-linecap="round" stroke-linejoin="round"><path transform="translate(0.00 0)" d="M2 1.6H8M5 1.6V8.8M1 8.8H9"/><path transform="translate(10.40 0)" d="M5 .4V2M2 2.6H7.6L1.8 7.6M5 5.4V9.8M6.2 6L8.8 8"/><path transform="translate(20.80 0)" d="M3 1.4L7.2 2.4M2.6 4.4L7.2 5.4M2 7.4L8.2 9"/><path transform="translate(31.20 0)" d="M.8 5H9.2"/><path transform="translate(41.60 0)" d="M1 1V9.6H9V1ZM2.8 2.8L3.8 4.2M4.8 2.6L5.8 3.8M7.2 2.4Q6.4 6.4 2.8 8M3.6 5.2L7.2 8"/><path transform="translate(52.00 0)" d="M2.5 .8L.6 3M2.5 .8L4.2 3M1.2 4.4H3.8M1.2 6.4H3.8M2.5 4.4V9.4M.8 9.4H4.2M5.2 1H7.4V4.6H5.2ZM5.2 2.8H7.4M8.2 .6L9.8 3.4M8.4 2.4H9.8M5.4 6.4H9.6V9.4H5.4ZM7.5 6.4V9.4"/></g></svg>
<div class="a" style="left:444px;top:321px;width:20px;height:20px;background:#d2d0ce"></div>
<svg class="a" style="left:463px;top:323px;overflow:visible" width="89.60" height="16" viewBox="0 0 56.00 10"><g fill="none" stroke="#6a5d50" stroke-width="0.9" stroke-linecap="round" stroke-linejoin="round"><path transform="translate(0.00 0)" d="M6.4 .4Q3.4 5 6.4 9.6"/><path transform="translate(8.00 0)" d="M1 1.6H9L6.6 4.6M5.2 3.4Q5.2 7.6 2 9.6"/><path transform="translate(16.00 0)" d="M8.4 .8Q5.5 4.4 1.4 6.2M5.8 3.8V9.8"/><path transform="translate(24.00 0)" d="M2.2 1.2H7.8M1 3.9H9M5 3.9Q5 7.6 2.4 9.6"/><path transform="translate(32.00 0)" d="M4.6 .8Q3.2 5.6 1.4 8.6Q5 8.4 8.4 8M6.6 5.4L9 9.6"/><path transform="translate(40.00 0)" d="M4.6 .4L2 3M3.6 1.6H7.6L2 6.6M3 3.6L5 4.6M3.6 6H8.6V9.8H3.6Z"/><path transform="translate(48.00 0)" d="M3.6 .4Q6.6 5 3.6 9.6"/></g></svg>
<svg class="a" style="left:524px;top:346px;overflow:visible" width="70.47" height="9" viewBox="0 0 78.30 10"><g fill="none" stroke="#6a5d50" stroke-width="1.0" stroke-linecap="round" stroke-linejoin="round"><path transform="translate(0.00 0)" d="M6.4 .4Q3.4 5 6.4 9.6"/><path transform="translate(8.70 0)" d="M1 1.6H9L6.6 4.6M5.2 3.4Q5.2 7.6 2 9.6"/><path transform="translate(17.40 0)" d="M8.4 .8Q5.5 4.4 1.4 6.2M5.8 3.8V9.8"/><path transform="translate(26.10 0)" d="M2.2 1.2H7.8M1 3.9H9M5 3.9Q5 7.6 2.4 9.6"/><path transform="translate(34.80 0)" d="M4.6 .8Q3.2 5.6 1.4 8.6Q5 8.4 8.4 8M6.6 5.4L9 9.6"/><path transform="translate(43.50 0)" d="M.8 1H4.2M1.4 2.8H3.6M1.4 4.4H3.6M1.4 6H3.6V9H1.4ZM6 .4L6.6 1.6M9 .4L8.4 1.6M5.4 2.6H9.6V5H5.4ZM6.6 5Q6.6 8.6 5 9.6M8.4 5V9H9.8"/><path transform="translate(52.20 0)" d="M1 2H4V8H1ZM1 5H4M5.6 1H9V9.6M5.6 1V6Q5.6 9 4.6 9.8M5.6 3.8H9M5.6 6.4H9"/><path transform="translate(60.90 0)" d="M5 .4V1.8M1 2.6H9M3 3Q5 7.6 9 9.6M7 3Q5 7.6 1 9.6"/><path transform="translate(69.60 0)" d="M3.6 .4Q6.6 5 3.6 9.6"/></g></svg>
<svg class="a" style="left:605px;top:325px" width="15" height="15" viewBox="0 0 15 15"><ellipse cx="7.5" cy="7.5" rx="6" ry="5" transform="rotate(-30 7.5 7.5)" fill="#c08a6a" stroke="#1e1410" stroke-width="1.3"/><ellipse cx="7.5" cy="7.5" rx="3.4" ry="2.4" transform="rotate(-30 7.5 7.5)" fill="#dcc4b4"/></svg>
<div class="t" style="left:622px;top:326px;color:#6a5c50;font-size:13px;letter-spacing:.6px">99,999</div>
<div class="a" style="left:382px;top:290px;width:90px;height:26px;border:1px solid rgba(255,255,255,.45)"></div>
<div class="a" style="left:388px;top:290px;width:77px;height:25px;border:1.5px solid #f5e800"></div>
<div class="a" style="left:423px;top:287px;width:8px;height:8px;background:#fff"></div>
<div class="a" style="left:384px;top:299px;width:8px;height:8px;background:#fff"></div>
<div class="a" style="left:462px;top:299px;width:8px;height:8px;background:#fff"></div>
<div class="a" style="left:423px;top:311px;width:8px;height:8px;background:#fff"></div>
<svg class="a" style="left:365px;top:272px" width="125" height="60" viewBox="0 0 125 60"><path d="M12.0 7.0 L6.2 13.8 L18.4 19.8ZM12.0 55.6 L6.2 48.8 L18.4 42.8ZM113.0 7.0 L118.8 13.8 L106.6 19.8ZM113.0 55.6 L118.8 48.8 L106.6 42.8Z" fill="rgba(40,20,10,.18)" stroke="#f4f4f4" stroke-width="1.1"/></svg>
<div class="a" style="left:431px;top:57px;width:1px;height:337px;background:rgba(255,255,255,.8)"></div>
<div class="a" style="left:327px;top:184px;width:55px;height:1px;background:rgba(255,255,255,.75)"></div>
<div class="a" style="left:382px;top:185px;width:273px;height:1px;background:rgba(255,255,255,.8)"></div>
<div class="a" style="left:431px;top:393px;width:83px;height:1px;background:rgba(255,255,255,.8)"></div>
<div class="a" style="left:329px;top:59px;width:43px;height:147px;background:#12161d;border-radius:4px"></div>
<div class="a" style="left:343px;top:65px;width:16px;height:1px;background:#8a8f96"></div>
<div class="a" style="left:343px;top:69px;width:16px;height:1px;background:#8a8f96"></div>
<div class="a" style="left:332px;top:77px;width:37px;height:20px;background:#4a6283;border-radius:3px 3px 0 0"></div>
<svg class="a" style="left:343.5px;top:79px" width="16" height="17" viewBox="0 0 14 15"><path d="M5 9V3.2M7.2 8.5V1.8M9.4 8.5V2.4M11.6 9V4.2" stroke="#f4f4f4" stroke-width="1.9" stroke-linecap="round"/><path d="M4.1 7.5H12.5V10.5Q12.5 14.5 8.5 14.5Q6 14.5 4.8 12.6L1.8 8.6Q1.2 7.6 2.2 7.3Q3 7.1 3.6 7.8L4.1 8.5Z" fill="#f4f4f4"/></svg>
<div class="a" style="left:332px;top:98px;width:37px;height:20px;background:#585858;border-radius:0"></div>
<svg class="a" style="left:343.5px;top:100px" width="16" height="17" viewBox="0 0 14 15"><path d="M7 1V13M1 7H13M5.2 2.8L7 1L8.8 2.8M5.2 11.2L7 13L8.8 11.2M2.8 5.2L1 7L2.8 8.8M11.2 5.2L13 7L11.2 8.8" fill="none" stroke="#c4c4c4" stroke-width="1.1"/></svg>
<div class="a" style="left:332px;top:119px;width:37px;height:20px;background:#585858;border-radius:0"></div>
<svg class="a" style="left:343.5px;top:121px" width="16" height="17" viewBox="0 0 14 15"><path d="M9.8 2.2A5.2 5.2 0 0 1 9 12.3M4.2 11.8A5.2 5.2 0 0 1 5 1.7M9.6 .6V3.6H12.4M4.4 13.4V10.4H1.6" fill="none" stroke="#c4c4c4" stroke-width="1.1"/></svg>
<div class="a" style="left:332px;top:140px;width:37px;height:20px;background:#585858;border-radius:0"></div>
<svg class="a" style="left:343.5px;top:142px" width="16" height="17" viewBox="0 0 14 15"><path d="M1.5 1.5H12.5V12.5H1.5ZM1.5 8.5H5.5V12.5M6 8L10.5 3.5M7.5 3.5H10.5V6.5" fill="none" stroke="#c4c4c4" stroke-width="1.1"/></svg>
<div class="a" style="left:332px;top:161px;width:37px;height:20px;background:#585858;border-radius:0"></div>
<svg class="a" style="left:343.5px;top:163px" width="16" height="17" viewBox="0 0 14 15"><path d="M4 2H10M4 12H10M2 4V10M12 4V10" fill="none" stroke="#c4c4c4" stroke-width="1.1"/><rect x="1" y="1" width="2" height="2" fill="#c4c4c4"/><rect x="11" y="1" width="2" height="2" fill="#c4c4c4"/><rect x="1" y="11" width="2" height="2" fill="#c4c4c4"/><rect x="11" y="11" width="2" height="2" fill="#c4c4c4"/></svg>
<div class="a" style="left:332px;top:182px;width:37px;height:20px;background:#585858;border-radius:0 0 3px 3px"></div>
<svg class="a" style="left:343.5px;top:184px" width="16" height="17" viewBox="0 0 14 15"><circle cx="7" cy="7" r="5" fill="none" stroke="#c4c4c4" stroke-width="1.1"/><path d="M7 3V11M3 7H11M6 4L7 3L8 4M6 10L7 11L8 10M4 6L3 7L4 8M10 6L11 7L10 8" fill="none" stroke="#c4c4c4" stroke-width="1"/><path d="M0 14L3 13.5L.5 11ZM14 0L11 .5L13.5 3Z" fill="#c4c4c4"/></svg>
<div class="a" style="left:551px;top:65px;width:16px;height:1px;background:#5d6470"></div>
<div class="a" style="left:551px;top:68px;width:16px;height:1px;background:#5d6470"></div>
<svg class="a" style="left:570px;top:68px" width="70" height="70" viewBox="0 0 70 70"><path d="M24 15H36L30 31Z" fill="#8cef5a"/><path d="M24 67H36L30 50Z" fill="#c8c8c8"/><path d="M2.5 34V47L21 40.5Z" fill="#d2d2d2"/><path d="M57 34V47L38 40.5Z" fill="#d9574a"/><rect x="23" y="34.5" width="14" height="12.5" fill="#eef0f4"/><text x="26.5" y="11" font-family="Liberation Sans" font-weight="bold" font-size="12" fill="#e8e8e8">y</text><text x="60" y="44" font-family="Liberation Sans" font-weight="bold" font-size="12" fill="#e8e8e8">x</text></svg>
<svg class="a" style="left:629px;top:73px" width="8" height="9" viewBox="0 0 8 9"><path d="M2 4V2.5A2 2 0 0 1 6 2.5" fill="none" stroke="#e0e0e0" stroke-width="1.1"/><rect x=".5" y="4" width="7" height="5" fill="#e0e0e0"/></svg>
<svg class="a" style="left:583px;top:155px" width="11" height="9" viewBox="0 0 11 9"><path d="M0 .8H11M0 4.5H11M0 8.2H11" stroke="#c9d0da" stroke-width="1"/></svg>
<div class="t" style="left:596px;top:151px;color:#c9d0da;font-size:12px">Iso</div>
<div class="a" style="left:329px;top:521px;width:316px;height:26px;background:#121212;border-radius:4px"></div>
<div class="a" style="left:334px;top:527px;width:1px;height:15px;background:#777"></div>
<div class="a" style="left:337px;top:527px;width:1px;height:15px;background:#777"></div>
<div class="a" style="left:345px;top:524px;width:32px;height:20px;background:#46607f;border-radius:2px"></div>
<svg class="a" style="left:353px;top:526px" width="16" height="16" viewBox="0 0 16 16"><path d="M5.6 3.6L8 1.2L10.4 3.6M5.6 12.4L8 14.8L10.4 12.4M3.6 5.6L1.2 8L3.6 10.4M12.4 5.6L14.8 8L12.4 10.4M8 1.5V5.8M8 10.2V14.5M1.5 8H5.8M10.2 8H14.5" fill="none" stroke="#cdd3da" stroke-width="1.2"/></svg>
<div class="a" style="left:378px;top:524px;width:32px;height:20px;background:#46607f;border-radius:2px"></div>
<svg class="a" style="left:386px;top:526px" width="16" height="16" viewBox="0 0 16 16"><rect x="2.5" y="1.5" width="11" height="4" rx=".8" fill="none" stroke="#d8d8d8" stroke-width="1.1"/><rect x="2.5" y="1.5" width="5.5" height="4" fill="#d8d8d8"/><path d="M1.5 9H14.5M1.5 13H14.5" stroke="#d8d8d8" stroke-width="1.1"/><circle cx="5.5" cy="9" r="1.5" fill="#d8d8d8"/><circle cx="10.5" cy="13" r="1.5" fill="#d8d8d8"/></svg>
<div class="a" style="left:411px;top:524px;width:32px;height:20px;background:#46607f;border-radius:2px"></div>
<svg class="a" style="left:419px;top:526px" width="16" height="16" viewBox="0 0 16 16"><path d="M4 1V10M7 1V7M1 3.5H9M1 6.5H8M1.5 15L14 1.5M9.5 8V15M11.5 6V15M13.5 4V15M8 11H14M8 13.5H14" fill="none" stroke="#d8d8d8" stroke-width="1"/></svg>
<div class="a" style="left:444px;top:524px;width:32px;height:20px;background:#46607f;border-radius:2px"></div>
<svg class="a" style="left:452px;top:526px" width="16" height="16" viewBox="0 0 16 16"><circle cx="8" cy="8" r="6" fill="#d8d8d8"/><circle cx="6.7" cy="6.7" r="4.5" fill="#46607f"/><circle cx="8" cy="8" r="5.4" fill="none" stroke="#d8d8d8" stroke-width="1.1"/></svg>
<div class="a" style="left:477px;top:524px;width:32px;height:20px;background:#46607f;border-radius:2px"></div>
<svg class="a" style="left:485px;top:526px" width="16" height="16" viewBox="0 0 16 16"><circle cx="5.5" cy="3" r="2.4" fill="#d8d8d8"/><path d="M8 6.2L14.5 9.7L8 13.2L1.5 9.7Z M4.8 8L11.2 11.5M11.2 8L4.8 11.5" fill="none" stroke="#d8d8d8" stroke-width="1.2"/></svg>
<div class="a" style="left:510px;top:524px;width:32px;height:20px;background:#585858;border-radius:2px"></div>
<svg class="a" style="left:518px;top:526px" width="16" height="16" viewBox="0 0 16 16"><circle cx="6.5" cy="6.5" r="4" fill="none" stroke="#d8d8d8" stroke-width="1.2"/><path d="M9.5 9.5L13.5 13.5" stroke="#d8d8d8" stroke-width="1.6"/></svg>
<div class="a" style="left:543px;top:524px;width:32px;height:20px;background:#46607f;border-radius:2px"></div>
<svg class="a" style="left:551px;top:526px" width="16" height="16" viewBox="0 0 16 16"><rect x="5.8" y="5.8" width="4.4" height="4.4" fill="none" stroke="#e0e0e0" stroke-width="1.3"/><path d="M6.6 1.5H9.4L9 4.2H7ZM6.6 14.5H9.4L9 11.8H7ZM1.5 6.6V9.4L4.2 9V7ZM14.5 6.6V9.4L11.8 9V7Z" fill="#e0e0e0"/></svg>
<div class="a" style="left:576px;top:524px;width:32px;height:20px;background:#585858;border-radius:2px"></div>
<svg class="a" style="left:584px;top:526px" width="16" height="16" viewBox="0 0 16 16"><rect x="2" y=".5" width="8" height="7" rx="1" fill="#d8d8d8"/><path d="M10 3L14 1V7L10 5Z" fill="#d8d8d8"/><path d="M2.5 12Q8 6.8 13.5 12Q8 17.2 2.5 12Z" fill="none" stroke="#d8d8d8" stroke-width="1.3"/><circle cx="8" cy="12" r="1.8" fill="#d8d8d8"/></svg>
<div class="a" style="left:609px;top:524px;width:32px;height:20px;background:#585858;border-radius:2px"></div>
<svg class="a" style="left:617px;top:526px" width="16" height="16" viewBox="0 0 16 16"><circle cx="8" cy="8" r="6.2" fill="none" stroke="#c8c8c8" stroke-width="1.1"/><path d="M11.8 4.2L9 9L4.2 11.8L7 7Z" fill="none" stroke="#c8c8c8" stroke-width="1.1"/><circle cx="8" cy="8" r=".9" fill="#c8c8c8"/></svg>
<div class="tab" style="left:657px;top:7px;width:95px;height:24px"></div>
<svg class="a" style="left:668px;top:14px" width="11" height="11" viewBox="0 0 11 11"><circle cx="5.5" cy="5.5" r="5.5" fill="#d0d0d0"/><circle cx="5.5" cy="3" r="1" fill="#3c3c3c"/><path d="M5.5 4.6V8.8" stroke="#3c3c3c" stroke-width="1.6"/></svg>
<div class="t" style="left:683px;top:13px;color:#cfcfcf;">Inspector</div>
<svg class="a" style="left:1002px;top:14px" width="10" height="11" viewBox="0 0 10 11"><path d="M2.5 5V3.2A2.5 2.5 0 0 1 7.5 3.2" fill="none" stroke="#d0d0d0" stroke-width="1.2"/><rect x="1" y="5.3" width="8" height="5.2" rx="1" fill="none" stroke="#d0d0d0" stroke-width="1.2"/></svg>
<svg class="a" style="left:1022px;top:13px" width="4" height="12" viewBox="0 0 4 12"><circle cx="2" cy="1.6" r="1.4" fill="#d0d0d0"/><circle cx="2" cy="6" r="1.4" fill="#d0d0d0"/><circle cx="2" cy="10.4" r="1.4" fill="#d0d0d0"/></svg>
<div class="a" style="left:657px;top:31px;width:374px;height:735px;background:#383838"></div>
<div class="a" style="left:657px;top:31px;width:368px;height:60px;background:#3c3c3c"></div>
<svg class="a" style="left:664px;top:41px" width="21" height="22" viewBox="0 0 21 22"><path d="M10.5 .5L20.5 5.5V16.5L10.5 21.5L.5 16.5V5.5Z" fill="#80d5fa"/><path d="M.8 5.7L10.5 10.6L20.2 5.7M10.5 10.6V21.5" fill="none" stroke="#2d2d2d" stroke-width="1.5"/></svg>
<svg class="a" style="left:682px;top:62px" width="9" height="5" viewBox="0 0 9 5"><path d="M0 0H9L4.5 5Z" fill="#d0d0d0"/></svg>
<div class="a" style="left:702px;top:42px;width:14px;height:14px;background:#2a2a2a;border:1px solid #202020;border-radius:3px"></div><svg class="a" style="left:704px;top:45px" width="10" height="9" viewBox="0 0 10 9"><path d="M1 4.5L3.8 7.2L9 1.5" fill="none" stroke="#e6e6e6" stroke-width="1.6"/></svg>
<div class="fld" style="left:722px;top:40px;width:223px;height:18px"></div>
<div class="t" style="left:726px;top:42px;color:#d6d6d6;font-weight:bold;letter-spacing:.2px">Text (TMP)</div>
<div class="a" style="left:948px;top:42px;width:14px;height:14px;background:#2a2a2a;border:1px solid #202020;border-radius:3px"></div>
<div class="t" style="left:966px;top:42px;color:#c8c8c8;letter-spacing:.3px">Static</div>
<svg class="a" style="left:1011px;top:47px" width="8" height="5" viewBox="0 0 8 5"><path d="M0 0H8L4 5Z" fill="#d0d0d0"/></svg>
<div class="t" style="left:698px;top:66px;color:#a8a8a8;">Tag</div>
<div class="a" style="left:722px;top:65px;width:129px;height:16px;background:#515151;border-radius:3px;border-bottom:1px solid #404040"></div><div class="t" style="left:726px;top:66.0px;color:#d2d2d2;width:111px;overflow:hidden">Untagged</div><svg class="a" style="left:838px;top:71.0px" width="9" height="5" viewBox="0 0 9 5"><path d="M0 0H9L4.5 5Z" fill="#d0d0d0"/></svg>
<div class="t" style="left:866px;top:66px;color:#a8a8a8;">Layer</div>
<div class="a" style="left:902px;top:65px;width:118px;height:16px;background:#515151;border-radius:3px;border-bottom:1px solid #404040"></div><div class="t" style="left:906px;top:66.0px;color:#d2d2d2;width:100px;overflow:hidden">UI</div><svg class="a" style="left:1007px;top:71.0px" width="9" height="5" viewBox="0 0 9 5"><path d="M0 0H9L4.5 5Z" fill="#d0d0d0"/></svg>
<div class="a" style="left:657px;top:90px;width:368px;height:21px;background:#3e3e3e;border-top:1px solid #262626"></div><svg class="a" style="left:663px;top:96px" width="9" height="8" viewBox="0 0 9 8"><path d="M0 0H9L4.5 8Z" fill="#6c6c6c"/></svg><svg class="a" style="left:679px;top:95px" width="13" height="13" viewBox="0 0 13 13"><path d="M1 1L5 2.2L2.2 5ZM12 1L8 2.2L10.8 5ZM1 12L5 10.8L2.2 8ZM12 12L8 10.8L10.8 8Z" fill="#d0d0d0"/><path d="M1 1L4.5 4.5M12 1L8.5 4.5M1 12L4.5 8.5M12 12L8.5 8.5" stroke="#d0d0d0" stroke-width="1.4"/></svg><div class="t" style="left:717px;top:94px;color:#d4d4d4;font-weight:bold;letter-spacing:0px">Rect Transform</div><svg class="a" style="left:967px;top:95px" width="10" height="10" viewBox="0 0 10 10"><circle cx="5" cy="5" r="5" fill="#c8c8c8"/><path d="M3.4 3.8Q3.4 2.2 5 2.2Q6.6 2.2 6.6 3.6Q6.6 4.6 5 5.3V6.2" fill="none" stroke="#383838" stroke-width="1.3"/><circle cx="5" cy="7.8" r=".8" fill="#383838"/></svg><svg class="a" style="left:987px;top:95px" width="11" height="10" viewBox="0 0 11 10"><path d="M0 3H11M0 7.5H11" stroke="#c8c8c8" stroke-width="1.2"/><path d="M6.5 .5V5.5M3.5 5V10" stroke="#c8c8c8" stroke-width="1.8"/><path d="M0 3H2M9 3H11" stroke="#3c3c3c" stroke-width="0"/></svg><svg class="a" style="left:1011px;top:94px" width="4" height="12" viewBox="0 0 4 12"><circle cx="2" cy="1.6" r="1.3" fill="#c8c8c8"/><circle cx="2" cy="6" r="1.3" fill="#c8c8c8"/><circle cx="2" cy="10.4" r="1.3" fill="#c8c8c8"/></svg>
<div class="a" style="left:657px;top:111px;width:368px;height:1px;background:#2e2e2e"></div>
<div class="a" style="left:657px;top:118px;width:2px;height:72px;background:#0f8bd8"></div>
<div class="t" style="left:685px;top:120px;color:#c4c4c4;font-size:10px;letter-spacing:.3px;-webkit-text-stroke:.2px #c4c4c4">stretch</div>
<div class="t" style="left:650px;top:150px;color:#c4c4c4;font-size:10px;letter-spacing:.3px;-webkit-text-stroke:.2px #c4c4c4;transform:rotate(-90deg);transform-origin:center;width:42px;text-align:center">stretch</div>
<svg class="a" style="left:682px;top:138px" width="39" height="39" viewBox="0 0 39 39"><rect x="1.5" y="1.5" width="36" height="36" fill="none" stroke="#8a8a8a" stroke-width="1"/><rect x="0" y="0" width="3" height="3" fill="#e0a000"/><rect x="36" y="0" width="3" height="3" fill="#e0a000"/><rect x="0" y="36" width="3" height="3" fill="#e0a000"/><rect x="36" y="36" width="3" height="3" fill="#e0a000"/><rect x="11.5" y="11.5" width="16" height="16" fill="none" stroke="#c0c0c0" stroke-width=".8"/><path d="M19.5 13V26M13 19.5H26" stroke="#1e9ce0" stroke-width="1.4"/><path d="M17 15L19.5 12.5L22 15M17 24L19.5 26.5L22 24M15 17L12.5 19.5L15 22M24 17L26.5 19.5L24 22" fill="none" stroke="#1e9ce0" stroke-width="1.4"/></svg>
<div class="t" style="left:807px;top:120px;color:#e0e0e0;-webkit-text-stroke:.5px #e0e0e0">Left</div>
<div class="t" style="left:879px;top:120px;color:#b8b8b8;">Top</div>
<div class="t" style="left:952px;top:120px;color:#b8b8b8;">Pos Z</div>
<div class="fld" style="left:806px;top:136px;width:70px;height:17px;"></div>
<div class="t" style="left:809px;top:138px;color:#e0e0e0;-webkit-text-stroke:.5px #e0e0e0">12</div>
<div class="fld" style="left:878px;top:136px;width:70px;height:17px;"></div><div class="t" style="left:881px;top:137.5px;color:#d2d2d2;">0</div>
<div class="fld" style="left:951px;top:136px;width:70px;height:17px;"></div><div class="t" style="left:954px;top:137.5px;color:#d2d2d2;">0</div>
<div class="t" style="left:807px;top:156px;color:#e0e0e0;-webkit-text-stroke:.5px #e0e0e0">Right</div>
<div class="t" style="left:879px;top:156px;color:#b8b8b8;">Bottom</div>
<div class="fld" style="left:806px;top:172px;width:70px;height:17px;"></div>
<div class="t" style="left:809px;top:174px;color:#e0e0e0;-webkit-text-stroke:.5px #e0e0e0">12</div>
<div class="fld" style="left:878px;top:172px;width:70px;height:17px;"></div><div class="t" style="left:881px;top:173.5px;color:#d2d2d2;">0</div>
<div class="a" style="left:969px;top:172px;width:51px;height:17px;background:#565656;border-radius:3px"></div>
<div class="a" style="left:994px;top:172px;width:1px;height:17px;background:#3a3a3a"></div>
<svg class="a" style="left:976px;top:175px" width="11" height="11" viewBox="0 0 11 11"><rect x=".5" y=".5" width="10" height="10" fill="none" stroke="#a0a0a0" stroke-width="1" stroke-dasharray="2 1.3"/></svg>
<div class="t" style="left:1002px;top:173px;color:#a0a0a0;font-size:11px">R</div>
<svg class="a" style="left:663px;top:198px" width="9" height="8" viewBox="0 0 9 8"><path d="M0 0H9L4.5 8Z" fill="#8a8a8a"/></svg>
<div class="t" style="left:676px;top:194px;color:#c4c4c4;">Anchors</div>
<div class="t" style="left:691px;top:212px;color:#b8b8b8;">Min</div>
<div class="t" style="left:807px;top:212px;color:#b8b8b8;">X</div>
<div class="fld" style="left:818px;top:211px;width:58px;height:17px;"></div><div class="t" style="left:821px;top:212.5px;color:#d2d2d2;">0</div>
<div class="t" style="left:880px;top:212px;color:#b8b8b8;">Y</div>
<div class="fld" style="left:890px;top:211px;width:59px;height:17px;"></div><div class="t" style="left:893px;top:212.5px;color:#d2d2d2;">0</div>
<div class="t" style="left:691px;top:232px;color:#b8b8b8;">Max</div>
<div class="t" style="left:807px;top:232px;color:#b8b8b8;">X</div>
<div class="fld" style="left:818px;top:231px;width:58px;height:17px;"></div><div class="t" style="left:821px;top:232.5px;color:#d2d2d2;">1</div>
<div class="t" style="left:880px;top:232px;color:#b8b8b8;">Y</div>
<div class="fld" style="left:890px;top:231px;width:59px;height:17px;"></div><div class="t" style="left:893px;top:232.5px;color:#d2d2d2;">1</div>
<div class="t" style="left:676px;top:254px;color:#b8b8b8;">Pivot</div>
<div class="t" style="left:807px;top:254px;color:#b8b8b8;">X</div>
<div class="fld" style="left:818px;top:253px;width:58px;height:17px;"></div><div class="t" style="left:821px;top:254.5px;color:#d2d2d2;">0.5</div>
<div class="t" style="left:880px;top:254px;color:#b8b8b8;">Y</div>
<div class="fld" style="left:890px;top:253px;width:59px;height:17px;"></div><div class="t" style="left:893px;top:254.5px;color:#d2d2d2;">0.5</div>
<div class="t" style="left:676px;top:282px;color:#b8b8b8;">Rotation</div>
<div class="t" style="left:810px;top:282px;color:#b8b8b8;">X</div>
<div class="fld" style="left:824px;top:281px;width:53px;height:17px;"></div><div class="t" style="left:827px;top:282.5px;color:#d2d2d2;">0</div>
<div class="t" style="left:883px;top:282px;color:#b8b8b8;">Y</div>
<div class="fld" style="left:896px;top:281px;width:53px;height:17px;"></div><div class="t" style="left:899px;top:282.5px;color:#d2d2d2;">0</div>
<div class="t" style="left:955px;top:282px;color:#b8b8b8;">Z</div>
<div class="fld" style="left:968px;top:281px;width:53px;height:17px;"></div><div class="t" style="left:971px;top:282.5px;color:#d2d2d2;">0</div>
<div class="t" style="left:676px;top:302px;color:#b8b8b8;">Scale</div>
<svg class="a" style="left:787px;top:303px" width="14" height="11" viewBox="0 0 14 11"><path d="M5 2H3.5A3.5 3.5 0 0 0 3.5 9H5M9 2H10.5A3.5 3.5 0 0 1 10.5 9H9M4.5 5.5H9.5M1.5 .5L12.5 10.5" fill="none" stroke="#c8c8c8" stroke-width="1.2"/></svg>
<div class="t" style="left:810px;top:302px;color:#b8b8b8;">X</div>
<div class="fld" style="left:824px;top:301px;width:53px;height:17px;"></div><div class="t" style="left:827px;top:302.5px;color:#d2d2d2;">1</div>
<div class="t" style="left:883px;top:302px;color:#b8b8b8;">Y</div>
<div class="fld" style="left:896px;top:301px;width:53px;height:17px;"></div><div class="t" style="left:899px;top:302.5px;color:#d2d2d2;">1</div>
<div class="t" style="left:955px;top:302px;color:#b8b8b8;">Z</div>
<div class="fld" style="left:968px;top:301px;width:53px;height:17px;"></div><div class="t" style="left:971px;top:302.5px;color:#d2d2d2;">1</div>
<div class="a" style="left:657px;top:327px;width:368px;height:21px;background:#3e3e3e;border-top:1px solid #262626"></div><svg class="a" style="left:663px;top:333px" width="9" height="8" viewBox="0 0 9 8"><path d="M0 0V9L8 4.5Z" fill="#6c6c6c"/></svg><svg class="a" style="left:677px;top:332px" width="17" height="11" viewBox="0 0 17 11"><path d="M1 5.5Q8.5 -2.5 16 5.5Q8.5 13.5 1 5.5Z" fill="none" stroke="#d8d8d8" stroke-width="1.3"/><circle cx="8.5" cy="5.5" r="2.6" fill="none" stroke="#d8d8d8" stroke-width="1.3"/></svg><div class="t" style="left:717px;top:331px;color:#d4d4d4;font-weight:bold;letter-spacing:-.15px">Canvas Renderer</div><svg class="a" style="left:967px;top:332px" width="10" height="10" viewBox="0 0 10 10"><circle cx="5" cy="5" r="5" fill="#c8c8c8"/><path d="M3.4 3.8Q3.4 2.2 5 2.2Q6.6 2.2 6.6 3.6Q6.6 4.6 5 5.3V6.2" fill="none" stroke="#383838" stroke-width="1.3"/><circle cx="5" cy="7.8" r=".8" fill="#383838"/></svg><svg class="a" style="left:987px;top:332px" width="11" height="10" viewBox="0 0 11 10"><path d="M0 3H11M0 7.5H11" stroke="#c8c8c8" stroke-width="1.2"/><path d="M6.5 .5V5.5M3.5 5V10" stroke="#c8c8c8" stroke-width="1.8"/><path d="M0 3H2M9 3H11" stroke="#3c3c3c" stroke-width="0"/></svg><svg class="a" style="left:1011px;top:331px" width="4" height="12" viewBox="0 0 4 12"><circle cx="2" cy="1.6" r="1.3" fill="#c8c8c8"/><circle cx="2" cy="6" r="1.3" fill="#c8c8c8"/><circle cx="2" cy="10.4" r="1.3" fill="#c8c8c8"/></svg>
<div class="a" style="left:657px;top:348px;width:368px;height:22px;background:#3e3e3e;border-top:1px solid #262626"></div><svg class="a" style="left:663px;top:354px" width="9" height="8" viewBox="0 0 9 8"><path d="M0 0H9L4.5 8Z" fill="#6c6c6c"/></svg><svg class="a" style="left:677px;top:352px" width="15" height="15" viewBox="0 0 15 15"><rect x=".7" y=".7" width="13.6" height="13.6" fill="none" stroke="#1aa3e8" stroke-width="1.3"/><path d="M3.5 3.5H11.5M7.5 3.5V12" stroke="#1aa3e8" stroke-width="1.4"/><path d="M3.5 3.5V5M11.5 3.5V5M6 12H9" stroke="#1aa3e8" stroke-width="1.2"/></svg><div class="t" style="left:717px;top:352px;color:#d4d4d4;font-weight:bold;letter-spacing:.2px">TextMeshPro - Text (UI)</div><svg class="a" style="left:967px;top:353px" width="10" height="10" viewBox="0 0 10 10"><circle cx="5" cy="5" r="5" fill="#c8c8c8"/><path d="M3.4 3.8Q3.4 2.2 5 2.2Q6.6 2.2 6.6 3.6Q6.6 4.6 5 5.3V6.2" fill="none" stroke="#383838" stroke-width="1.3"/><circle cx="5" cy="7.8" r=".8" fill="#383838"/></svg><svg class="a" style="left:987px;top:353px" width="11" height="10" viewBox="0 0 11 10"><path d="M0 3H11M0 7.5H11" stroke="#c8c8c8" stroke-width="1.2"/><path d="M6.5 .5V5.5M3.5 5V10" stroke="#c8c8c8" stroke-width="1.8"/><path d="M0 3H2M9 3H11" stroke="#3c3c3c" stroke-width="0"/></svg><svg class="a" style="left:1011px;top:352px" width="4" height="12" viewBox="0 0 4 12"><circle cx="2" cy="1.6" r="1.3" fill="#c8c8c8"/><circle cx="2" cy="6" r="1.3" fill="#c8c8c8"/><circle cx="2" cy="10.4" r="1.3" fill="#c8c8c8"/></svg>
<div class="a" style="left:697px;top:352px;width:14px;height:14px;background:#2a2a2a;border:1px solid #202020;border-radius:3px"></div><svg class="a" style="left:699px;top:355px" width="10" height="9" viewBox="0 0 10 9"><path d="M1 4.5L3.8 7.2L9 1.5" fill="none" stroke="#e6e6e6" stroke-width="1.6"/></svg>
<div class="a" style="left:657px;top:370px;width:368px;height:1px;background:#2e2e2e"></div>
<div class="a" style="left:667px;top:384px;width:354px;height:21px;background:#474747;border:1px solid #2c2c2c;border-radius:2px"></div>
<div class="t" style="left:675px;top:388px;color:#d8d8d8;font-weight:bold">Text Input</div>
<div class="t" style="left:884px;top:388px;color:#c0c0c0;letter-spacing:.1px">Enable RTL Editor</div>
<div class="a" style="left:995px;top:388px;width:14px;height:14px;background:#2a2a2a;border:1px solid #202020;border-radius:3px"></div>
<div class="a" style="left:657px;top:407px;width:2px;height:95px;background:#0f8bd8"></div>
<div class="fld" style="left:675px;top:425px;width:346px;height:78px;border-radius:4px"></div>
<svg class="a" style="left:678px;top:430px;overflow:visible" width="69.00" height="11.5" viewBox="0 0 60.00 10"><g fill="none" stroke="#c8c8c8" stroke-width="0.8" stroke-linecap="round" stroke-linejoin="round"><path transform="translate(0.00 0)" d="M1 1.6H9L6.6 4.6M5.2 3.4Q5.2 7.6 2 9.6"/><path transform="translate(10.00 0)" d="M8.4 .8Q5.5 4.4 1.4 6.2M5.8 3.8V9.8"/><path transform="translate(20.00 0)" d="M2.2 1.2H7.8M1 3.9H9M5 3.9Q5 7.6 2.4 9.6"/><path transform="translate(30.00 0)" d="M4.6 .8Q3.2 5.6 1.4 8.6Q5 8.4 8.4 8M6.6 5.4L9 9.6"/><path transform="translate(40.00 0)" d="M1 1V9.6H9V1ZM2.8 2.8L3.8 4.2M4.8 2.6L5.8 3.8M7.2 2.4Q6.4 6.4 2.8 8M3.6 5.2L7.2 8"/><path transform="translate(50.00 0)" d="M2.5 .8L.6 3M2.5 .8L4.2 3M1.2 4.4H3.8M1.2 6.4H3.8M2.5 4.4V9.4M.8 9.4H4.2M5.2 1H7.4V4.6H5.2ZM5.2 2.8H7.4M8.2 .6L9.8 3.4M8.4 2.4H9.8M5.4 6.4H9.6V9.4H5.4ZM7.5 6.4V9.4"/></g></svg>
<div class="t" style="left:676px;top:507px;color:#b8b8b8;">Text Style</div>
<div class="a" style="left:810px;top:506px;width:211px;height:17px;background:#515151;border-radius:3px;border-bottom:1px solid #404040"></div><div class="t" style="left:814px;top:507.5px;color:#d2d2d2;width:193px;overflow:hidden">Normal</div><svg class="a" style="left:1008px;top:512.5px" width="9" height="5" viewBox="0 0 9 5"><path d="M0 0H9L4.5 5Z" fill="#d0d0d0"/></svg>
<div class="a" style="left:667px;top:525px;width:354px;height:20px;background:#474747;border:1px solid #2c2c2c;border-radius:2px"></div>
<div class="t" style="left:675px;top:529px;color:#d8d8d8;font-weight:bold">Main Settings</div>
<div class="t" style="left:676px;top:550px;color:#b8b8b8;">Font Asset</div>
<div class="fld" style="left:810px;top:548px;width:211px;height:18px"></div>
<svg class="a" style="left:812px;top:550px" width="13" height="14" viewBox="0 0 13 14"><rect x=".6" y=".6" width="11.8" height="12.8" fill="none" stroke="#1aa3e8" stroke-width="1.1"/><path d="M4 11.5V2.5H9.5M4 7H8.5" fill="none" stroke="#1aa3e8" stroke-width="1.2"/></svg>
<div class="t" style="left:825px;top:550px;color:#d2d2d2;letter-spacing:-.15px;width:177px;overflow:hidden">NotoSans_WhiteShadow (TMP_</div>
<div class="a" style="left:1002px;top:549px;width:18px;height:16px;background:#2e2e2e;border-left:1px solid #242424"></div>
<svg class="a" style="left:1005px;top:551px" width="12" height="12" viewBox="0 0 12 12"><circle cx="6" cy="6" r="4.8" fill="none" stroke="#d0d0d0" stroke-width="1.2"/><circle cx="6" cy="6" r="1.8" fill="#d0d0d0"/></svg>
<div class="t" style="left:676px;top:570px;color:#b8b8b8;">Material Preset</div>
<div class="a" style="left:810px;top:569px;width:211px;height:16px;background:#515151;border-radius:3px;border-bottom:1px solid #404040"></div><div class="t" style="left:814px;top:570.0px;color:#d2d2d2;width:193px;overflow:hidden"><span style="font-size:12px;letter-spacing:-.15px">NotoSansCJKjp-Black Atlas Material</span></div><svg class="a" style="left:1008px;top:575.0px" width="9" height="5" viewBox="0 0 9 5"><path d="M0 0H9L4.5 5Z" fill="#d0d0d0"/></svg>
<div class="t" style="left:676px;top:590px;color:#b8b8b8;">Font Style</div>
<div class="a" style="left:808px;top:588px;width:28px;height:17px;background:#565656;border-radius:2px"></div>
<div class="t" style="left:808px;top:588px;width:28px;text-align:center;color:#d0d0d0">B</div>
<div class="a" style="left:837px;top:588px;width:29px;height:17px;background:#565656;border-radius:2px"></div>
<div class="t" style="left:837px;top:588px;width:29px;text-align:center;color:#d0d0d0">I</div>
<div class="a" style="left:867px;top:588px;width:30px;height:17px;background:#565656;border-radius:2px"></div>
<div class="t" style="left:867px;top:588px;width:30px;text-align:center;color:#d0d0d0">U</div>
<div class="a" style="left:898px;top:588px;width:30px;height:17px;background:#565656;border-radius:2px"></div>
<div class="t" style="left:898px;top:588px;width:30px;text-align:center;color:#d0d0d0">S</div>
<div class="a" style="left:930px;top:588px;width:27px;height:17px;background:#565656;border-radius:2px"></div>
<div class="t" style="left:930px;top:588px;width:27px;text-align:center;color:#d0d0d0">ab</div>
<div class="a" style="left:959px;top:588px;width:29px;height:17px;background:#565656;border-radius:2px"></div>
<div class="t" style="left:959px;top:588px;width:29px;text-align:center;color:#d0d0d0">AB</div>
<div class="a" style="left:989px;top:588px;width:31px;height:17px;background:#565656;border-radius:2px"></div>
<div class="t" style="left:989px;top:588px;width:31px;text-align:center;color:#d0d0d0">SC</div>
<div class="a" style="left:657px;top:609px;width:2px;height:18px;background:#0f8bd8"></div>
<div class="t" style="left:676px;top:611px;color:#7d7d7d;">Font Size</div>
<div class="fld" style="left:809px;top:610px;width:48px;height:17px;background:#2f2f2f;border-color:#2a2a2a"></div>
<div class="t" style="left:813px;top:611px;color:#7a7a7a;">26</div>
<div class="a" style="left:657px;top:628px;width:2px;height:19px;background:#0f8bd8"></div>
<div class="t" style="left:691px;top:631px;color:#d8d8d8;font-weight:bold">Auto Size</div>
<div class="a" style="left:809px;top:631px;width:14px;height:14px;background:#2a2a2a;border:1px solid #202020;border-radius:3px"></div><svg class="a" style="left:811px;top:634px" width="10" height="9" viewBox="0 0 10 9"><path d="M1 4.5L3.8 7.2L9 1.5" fill="none" stroke="#e6e6e6" stroke-width="1.6"/></svg>
<div class="t" style="left:691px;top:651px;color:#b8b8b8;">Auto Size Options</div>
<div class="t" style="left:809px;top:651px;color:#b8b8b8;">Min</div>
<div class="fld" style="left:833px;top:649px;width:26px;height:17px;"></div><div class="t" style="left:836px;top:650.5px;color:#d2d2d2;">18</div>
<div class="t" style="left:861px;top:651px;color:#b8b8b8;">Max</div>
<div class="fld" style="left:889px;top:649px;width:24px;height:17px;"></div><div class="t" style="left:892px;top:650.5px;color:#d2d2d2;">72</div>
<div class="t" style="left:915px;top:651px;color:#b8b8b8;">WD%</div>
<div class="fld" style="left:952px;top:649px;width:15px;height:17px;"></div><div class="t" style="left:955px;top:650.5px;color:#d2d2d2;">0</div>
<div class="t" style="left:968px;top:651px;color:#b8b8b8;">Line</div>
<div class="fld" style="left:997px;top:649px;width:24px;height:17px;"></div><div class="t" style="left:1000px;top:650.5px;color:#d2d2d2;">0</div>
<div class="a" style="left:657px;top:677px;width:2px;height:20px;background:#0f8bd8"></div>
<div class="t" style="left:676px;top:679px;color:#d8d8d8;font-weight:bold">Vertex Color</div>
<div class="a" style="left:809px;top:677px;width:212px;height:18px;background:#2a2a2a;border-radius:3px;border:1px solid #222"></div>
<div class="a" style="left:810px;top:678px;width:192px;height:12px;background:#4e1418"></div>
<div class="a" style="left:810px;top:690px;width:192px;height:4px;background:#ffffff"></div>
<svg class="a" style="left:1005px;top:680px" width="12" height="12" viewBox="0 0 12 12"><path d="M1 11L2 8.5L7 3.5L8.5 5L3.5 10Z" fill="none" stroke="#d0d0d0" stroke-width="1.1"/><path d="M6.5 2.5L9.5 5.5M8 1.5Q9.5 0 11 1.5Q12 3 10.5 4Z" fill="#d0d0d0" stroke="#d0d0d0" stroke-width="1.3"/></svg>
<div class="t" style="left:676px;top:699px;color:#b8b8b8;">Color Gradient</div>
<div class="a" style="left:809px;top:699px;width:14px;height:14px;background:#2a2a2a;border:1px solid #202020;border-radius:3px"></div>
<div class="t" style="left:676px;top:719px;color:#b8b8b8;">Override Tags</div>
<div class="a" style="left:809px;top:719px;width:14px;height:14px;background:#2a2a2a;border:1px solid #202020;border-radius:3px"></div>
<div class="t" style="left:676px;top:746px;color:#b8b8b8;">Spacing Options (em)</div>
<div class="t" style="left:809px;top:746px;color:#b8b8b8;">Character</div>
<div class="fld" style="left:868px;top:745px;width:44px;height:17px;"></div><div class="t" style="left:871px;top:746.5px;color:#d2d2d2;">0</div>
<div class="t" style="left:916px;top:746px;color:#b8b8b8;">Word</div>
<div class="fld" style="left:976px;top:745px;width:45px;height:17px;"></div><div class="t" style="left:979px;top:746.5px;color:#d2d2d2;">0</div>
<div class="a" style="left:657px;top:757px;width:368px;height:9px;background:#3e3e3e;border-top:1px solid #262626"></div>
<div class="t" style="left:664px;top:758px;color:#d0d0d0;font-weight:bold">Layout Properties</div>
<div class="a" style="left:1025px;top:31px;width:6px;height:735px;background:#383838;border-left:1px solid #303030"></div>
<svg class="a" style="left:1027px;top:745px" width="8" height="5" viewBox="0 0 8 5"><path d="M0 0H8L4 5Z" fill="#d0d0d0"/></svg>
<svg class="a" style="left:1027px;top:38px" width="8" height="5" viewBox="0 0 8 5"><path d="M0 5H8L4 0Z" fill="#d0d0d0"/></svg>
<div class="a" style="left:1027px;top:48px;width:9px;height:255px;background:#5e5e5e;border-radius:5px"></div>
<div class="tab" style="left:4px;top:551px;width:81px;height:24px"></div>
<svg class="a" style="left:13px;top:558px" width="12" height="11" viewBox="0 0 12 11"><path d="M0 1Q0 0 1 0H4.5L6 1.6H11Q12 1.6 12 2.6V10Q12 11 11 11H1Q0 11 0 10Z" fill="#c8c8c8"/></svg>
<div class="t" style="left:30px;top:556px;color:#cfcfcf;">Project</div>
<svg class="a" style="left:96px;top:558px" width="10" height="11" viewBox="0 0 10 11"><rect x="0" y="0" width="10" height="11" rx="1" fill="#d0d0d0"/><path d="M2 2.5H8M2 4.5H6M2 6.5H8M2 8.5H6" stroke="#191919" stroke-width="1"/></svg>
<div class="t" style="left:111px;top:556px;color:#cfcfcf;">Console</div>
<svg class="a" style="left:183px;top:558px" width="11" height="11" viewBox="0 0 11 11"><path d="M1.5 0V11M5.5 0V11M9.5 0V11" stroke="#cfcfcf" stroke-width="1.1"/><rect x="0" y="6" width="3" height="2" fill="#cfcfcf"/><rect x="4" y="2.5" width="3" height="2" fill="#cfcfcf"/><rect x="8" y="5" width="3" height="2" fill="#cfcfcf"/></svg>
<div class="t" style="left:199px;top:556px;color:#cfcfcf;">Audio Mixer</div>
<svg class="a" style="left:621px;top:558px" width="10" height="11" viewBox="0 0 10 11"><path d="M2.5 5V3.2A2.5 2.5 0 0 1 7.5 3.2" fill="none" stroke="#d0d0d0" stroke-width="1.2"/><rect x="1" y="5.3" width="8" height="5.2" rx="1" fill="none" stroke="#d0d0d0" stroke-width="1.2"/></svg>
<svg class="a" style="left:640px;top:557px" width="4" height="12" viewBox="0 0 4 12"><circle cx="2" cy="1.6" r="1.4" fill="#d0d0d0"/><circle cx="2" cy="6" r="1.4" fill="#d0d0d0"/><circle cx="2" cy="10.4" r="1.4" fill="#d0d0d0"/></svg>
<div class="a" style="left:4px;top:575px;width:651px;height:21px;background:#3c3c3c;border-bottom:1px solid #242424"></div>
<svg class="a" style="left:10px;top:578px" width="26" height="14" viewBox="0 0 26 14"><path d="M6.5 1.5V12.5M1 7H12" stroke="#d8d8d8" stroke-width="1.6"/><path d="M16 5H24L20 9Z" fill="#d0d0d0"/></svg>
<div class="fld" style="left:189px;top:577px;width:318px;height:16px;background:#2b2b2b;border-color:#242424;border-radius:4px"></div>
<svg class="a" style="left:194px;top:580px" width="9" height="10" viewBox="0 0 9 10"><circle cx="3.5" cy="3.5" r="2.4" fill="none" stroke="#c8c8c8" stroke-width="1.2"/><path d="M5.2 5.4L7.8 8" stroke="#c8c8c8" stroke-width="1.4"/></svg>
<div class="a" style="left:490px;top:578px;width:16px;height:14px;background:#363636;border-radius:0 3px 3px 0"></div>
<svg class="a" style="left:492px;top:579px" width="13" height="13" viewBox="0 0 13 13"><rect x="3.5" y=".8" width="8.7" height="8.7" fill="none" stroke="#cfcfcf" stroke-width="1"/><rect x=".8" y="8" width="4.4" height="4.4" fill="#363636" stroke="#cfcfcf" stroke-width="1"/><path d="M5.5 7.3L10 2.8M6.8 2.8H10V6" fill="none" stroke="#cfcfcf" stroke-width="1"/></svg>
<div class="a" style="left:509px;top:575px;width:1px;height:20px;background:#2e2e2e"></div>
<div class="a" style="left:535px;top:575px;width:1px;height:20px;background:#2e2e2e"></div>
<div class="a" style="left:561px;top:575px;width:1px;height:20px;background:#2e2e2e"></div>
<div class="a" style="left:588px;top:575px;width:1px;height:20px;background:#2e2e2e"></div>
<div class="a" style="left:614px;top:575px;width:1px;height:20px;background:#2e2e2e"></div>
<svg class="a" style="left:515px;top:578px" width="14" height="14" viewBox="0 0 14 14"><rect x="1" y="0" width="5.5" height="5.5" fill="#c8c8c8"/><path d="M9.5 1L13.5 8H5.5Z" fill="#c8c8c8"/><circle cx="4" cy="10" r="3.6" fill="#c8c8c8"/></svg>
<svg class="a" style="left:542px;top:580px" width="12" height="12" viewBox="0 0 12 12"><path d="M6 0H12V6L6 12L0 6Z" fill="#c8c8c8"/><circle cx="9" cy="3" r="1.2" fill="#3c3c3c"/></svg>
<svg class="a" style="left:567px;top:578px" width="14" height="14" viewBox="0 0 14 14"><circle cx="7" cy="7" r="7" fill="#d0d0d0"/><path d="M7 3V8.2" stroke="#3c3c3c" stroke-width="2"/><circle cx="7" cy="10.6" r="1.1" fill="#3c3c3c"/></svg>
<svg class="a" style="left:594px;top:579px" width="13" height="13" viewBox="0 0 24 24"><path d="M12 1L15.1 8.3L23 9L17 14.2L18.8 22L12 17.9L5.2 22L7 14.2L1 9L8.9 8.3Z" fill="#a8a8a8"/></svg>
<svg class="a" style="left:620px;top:580px" width="15" height="11" viewBox="0 0 15 11"><path d="M.8 5.5Q7.5 -1.5 14.2 5.5Q7.5 12.5 .8 5.5Z" fill="none" stroke="#9a9a9a" stroke-width="1.1"/><circle cx="7.5" cy="5.5" r="2.3" fill="none" stroke="#9a9a9a" stroke-width="1.1"/></svg>
<div class="t" style="left:636px;top:577px;color:#c8c8c8;font-size:13px;letter-spacing:0">22</div>
<div class="a" style="left:4px;top:596px;width:194px;height:170px;background:#383838"></div>
<div class="a" style="left:4px;top:615px;width:193px;height:16px;background:#474747"></div>
<svg class="a" style="left:45px;top:596px" width="4" height="3" viewBox="0 0 4 3"><path d="M0 0H4L2 3Z" fill="#d0d0d0"/></svg>
<svg class="a" style="left:8px;top:619px" width="9" height="8" viewBox="0 0 9 8"><path d="M0 0H9L4.5 8Z" fill="#6c6c6c"/></svg>
<svg class="a" style="left:22px;top:618px" width="14" height="11" viewBox="0 0 14 11"><path d="M0 1Q0 0 1 0H4.5L6 1.6H11.5Q12.5 1.6 12.5 2.6V4H3L0 10Z" fill="#c8c8c8"/><path d="M3.4 4.8H14L11 11H.4Z" fill="#c8c8c8"/></svg>
<div class="t" style="left:39px;top:615px;color:#d0d0d0;font-weight:bold;letter-spacing:-.1px">Assets</div>
<svg class="a" style="left:36px;top:634px" width="13" height="11" viewBox="0 0 13 11"><path d="M.6 1.2Q.6 .6 1.2 .6H4.3L5.8 2.2H11.8Q12.4 2.2 12.4 2.8V9.8Q12.4 10.4 11.8 10.4H1.2Q.6 10.4 .6 9.8Z M.6 3.6H12.4" fill="none" stroke="#c8c8c8" stroke-width="1.1"/></svg>
<div class="t" style="left:53px;top:631px;color:#c4c4c4;">Audios</div>
<svg class="a" style="left:23px;top:651px" width="8" height="9" viewBox="0 0 8 9"><path d="M0 0V9L8 4.5Z" fill="#6c6c6c"/></svg>
<svg class="a" style="left:36px;top:650px" width="13" height="11" viewBox="0 0 13 11"><path d="M0 1Q0 0 1 0H4.5L6 1.6H12Q13 1.6 13 2.6V10Q13 11 12 11H1Q0 11 0 10Z" fill="#c8c8c8"/></svg>
<div class="t" style="left:53px;top:647px;color:#c4c4c4;">Fonts</div>
<svg class="a" style="left:36px;top:666px" width="13" height="11" viewBox="0 0 13 11"><path d="M0 1Q0 0 1 0H4.5L6 1.6H12Q13 1.6 13 2.6V10Q13 11 12 11H1Q0 11 0 10Z" fill="#c8c8c8"/></svg>
<div class="t" style="left:53px;top:663px;color:#c4c4c4;">Materials</div>
<svg class="a" style="left:36px;top:682px" width="13" height="11" viewBox="0 0 13 11"><path d="M0 1Q0 0 1 0H4.5L6 1.6H12Q13 1.6 13 2.6V10Q13 11 12 11H1Q0 11 0 10Z" fill="#c8c8c8"/></svg>
<div class="t" style="left:53px;top:679px;color:#c4c4c4;">Models</div>
<svg class="a" style="left:23px;top:699px" width="8" height="9" viewBox="0 0 8 9"><path d="M0 0V9L8 4.5Z" fill="#6c6c6c"/></svg>
<svg class="a" style="left:36px;top:698px" width="13" height="11" viewBox="0 0 13 11"><path d="M0 1Q0 0 1 0H4.5L6 1.6H12Q13 1.6 13 2.6V10Q13 11 12 11H1Q0 11 0 10Z" fill="#c8c8c8"/></svg>
<div class="t" style="left:53px;top:695px;color:#c4c4c4;">Plugins</div>
<svg class="a" style="left:22px;top:715px" width="9" height="8" viewBox="0 0 9 8"><path d="M0 0H9L4.5 8Z" fill="#6c6c6c"/></svg>
<svg class="a" style="left:36px;top:714px" width="14" height="11" viewBox="0 0 14 11"><path d="M0 1Q0 0 1 0H4.5L6 1.6H11.5Q12.5 1.6 12.5 2.6V4H3L0 10Z" fill="#c8c8c8"/><path d="M3.4 4.8H14L11 11H.4Z" fill="#c8c8c8"/></svg>
<div class="t" style="left:53px;top:711px;color:#c4c4c4;">Prefabs</div>
<svg class="a" style="left:50px;top:730px" width="13" height="11" viewBox="0 0 13 11"><path d="M0 1Q0 0 1 0H4.5L6 1.6H12Q13 1.6 13 2.6V10Q13 11 12 11H1Q0 11 0 10Z" fill="#c8c8c8"/></svg>
<div class="t" style="left:67px;top:727px;color:#c4c4c4;">Battle</div>
<svg class="a" style="left:50px;top:746px" width="13" height="11" viewBox="0 0 13 11"><path d="M0 1Q0 0 1 0H4.5L6 1.6H12Q13 1.6 13 2.6V10Q13 11 12 11H1Q0 11 0 10Z" fill="#c8c8c8"/></svg>
<div class="t" style="left:67px;top:743px;color:#c4c4c4;">Dungeon</div>
<svg class="a" style="left:50px;top:762px" width="13" height="11" viewBox="0 0 13 11"><path d="M0 1Q0 0 1 0H4.5L6 1.6H12Q13 1.6 13 2.6V10Q13 11 12 11H1Q0 11 0 10Z" fill="#c8c8c8"/></svg>
<div class="t" style="left:67px;top:759px;color:#c4c4c4;">Town</div>
<div class="a" style="left:198px;top:596px;width:12px;height:170px;background:#383838;border-left:1px solid #303030;border-right:1px solid #262626"></div>
<svg class="a" style="left:200px;top:603px" width="8" height="4" viewBox="0 0 8 4"><path d="M0 4H8L4 0Z" fill="#d8d8d8"/></svg>
<div class="a" style="left:199px;top:642px;width:10px;height:140px;background:#5e5e5e;border-radius:5px"></div>
<div class="a" style="left:210px;top:596px;width:445px;height:170px;background:#333333"></div>
<div class="a" style="left:210px;top:596px;width:445px;height:21px;background:#3e3e3e"></div>
<div class="t" style="left:215px;top:598px;color:#c8c8c8;font-weight:bold;font-size:12.5px">Assets</div>
<svg class="a" style="left:229px;top:620px" width="13" height="11" viewBox="0 0 13 11"><path d="M.6 1.2Q.6 .6 1.2 .6H4.3L5.8 2.2H11.8Q12.4 2.2 12.4 2.8V9.8Q12.4 10.4 11.8 10.4H1.2Q.6 10.4 .6 9.8Z M.6 3.6H12.4" fill="none" stroke="#c8c8c8" stroke-width="1.1"/></svg>
<div class="t" style="left:245px;top:617px;color:#c4c4c4;">Audios</div>
<svg class="a" style="left:229px;top:636px" width="13" height="11" viewBox="0 0 13 11"><path d="M0 1Q0 0 1 0H4.5L6 1.6H12Q13 1.6 13 2.6V10Q13 11 12 11H1Q0 11 0 10Z" fill="#c8c8c8"/></svg>
<div class="t" style="left:245px;top:633px;color:#c4c4c4;">Fonts</div>
<svg class="a" style="left:229px;top:652px" width="13" height="11" viewBox="0 0 13 11"><path d="M0 1Q0 0 1 0H4.5L6 1.6H12Q13 1.6 13 2.6V10Q13 11 12 11H1Q0 11 0 10Z" fill="#c8c8c8"/></svg>
<div class="t" style="left:245px;top:649px;color:#c4c4c4;">Materials</div>
<svg class="a" style="left:229px;top:668px" width="13" height="11" viewBox="0 0 13 11"><path d="M0 1Q0 0 1 0H4.5L6 1.6H12Q13 1.6 13 2.6V10Q13 11 12 11H1Q0 11 0 10Z" fill="#c8c8c8"/></svg>
<div class="t" style="left:245px;top:665px;color:#c4c4c4;">Models</div>
<svg class="a" style="left:229px;top:684px" width="13" height="11" viewBox="0 0 13 11"><path d="M0 1Q0 0 1 0H4.5L6 1.6H12Q13 1.6 13 2.6V10Q13 11 12 11H1Q0 11 0 10Z" fill="#c8c8c8"/></svg>
<div class="t" style="left:245px;top:681px;color:#c4c4c4;">Plugins</div>
<svg class="a" style="left:229px;top:700px" width="13" height="11" viewBox="0 0 13 11"><path d="M0 1Q0 0 1 0H4.5L6 1.6H12Q13 1.6 13 2.6V10Q13 11 12 11H1Q0 11 0 10Z" fill="#c8c8c8"/></svg>
<div class="t" style="left:245px;top:697px;color:#c4c4c4;">Prefabs</div>
<svg class="a" style="left:229px;top:716px" width="13" height="11" viewBox="0 0 13 11"><path d="M0 1Q0 0 1 0H4.5L6 1.6H12Q13 1.6 13 2.6V10Q13 11 12 11H1Q0 11 0 10Z" fill="#c8c8c8"/></svg>
<div class="t" style="left:245px;top:713px;color:#c4c4c4;">Resources</div>
<svg class="a" style="left:229px;top:732px" width="13" height="11" viewBox="0 0 13 11"><path d="M0 1Q0 0 1 0H4.5L6 1.6H12Q13 1.6 13 2.6V10Q13 11 12 11H1Q0 11 0 10Z" fill="#c8c8c8"/></svg>
<div class="t" style="left:245px;top:729px;color:#c4c4c4;">Scenes</div>
<svg class="a" style="left:229px;top:748px" width="13" height="11" viewBox="0 0 13 11"><path d="M0 1Q0 0 1 0H4.5L6 1.6H12Q13 1.6 13 2.6V10Q13 11 12 11H1Q0 11 0 10Z" fill="#c8c8c8"/></svg>
<div class="t" style="left:245px;top:745px;color:#c4c4c4;">ScriptableObjects</div>
<svg class="a" style="left:229px;top:764px" width="13" height="11" viewBox="0 0 13 11"><path d="M0 1Q0 0 1 0H4.5L6 1.6H12Q13 1.6 13 2.6V10Q13 11 12 11H1Q0 11 0 10Z" fill="#c8c8c8"/></svg>
<div class="t" style="left:245px;top:761px;color:#c4c4c4;">Scripts</div>
</body></html>
